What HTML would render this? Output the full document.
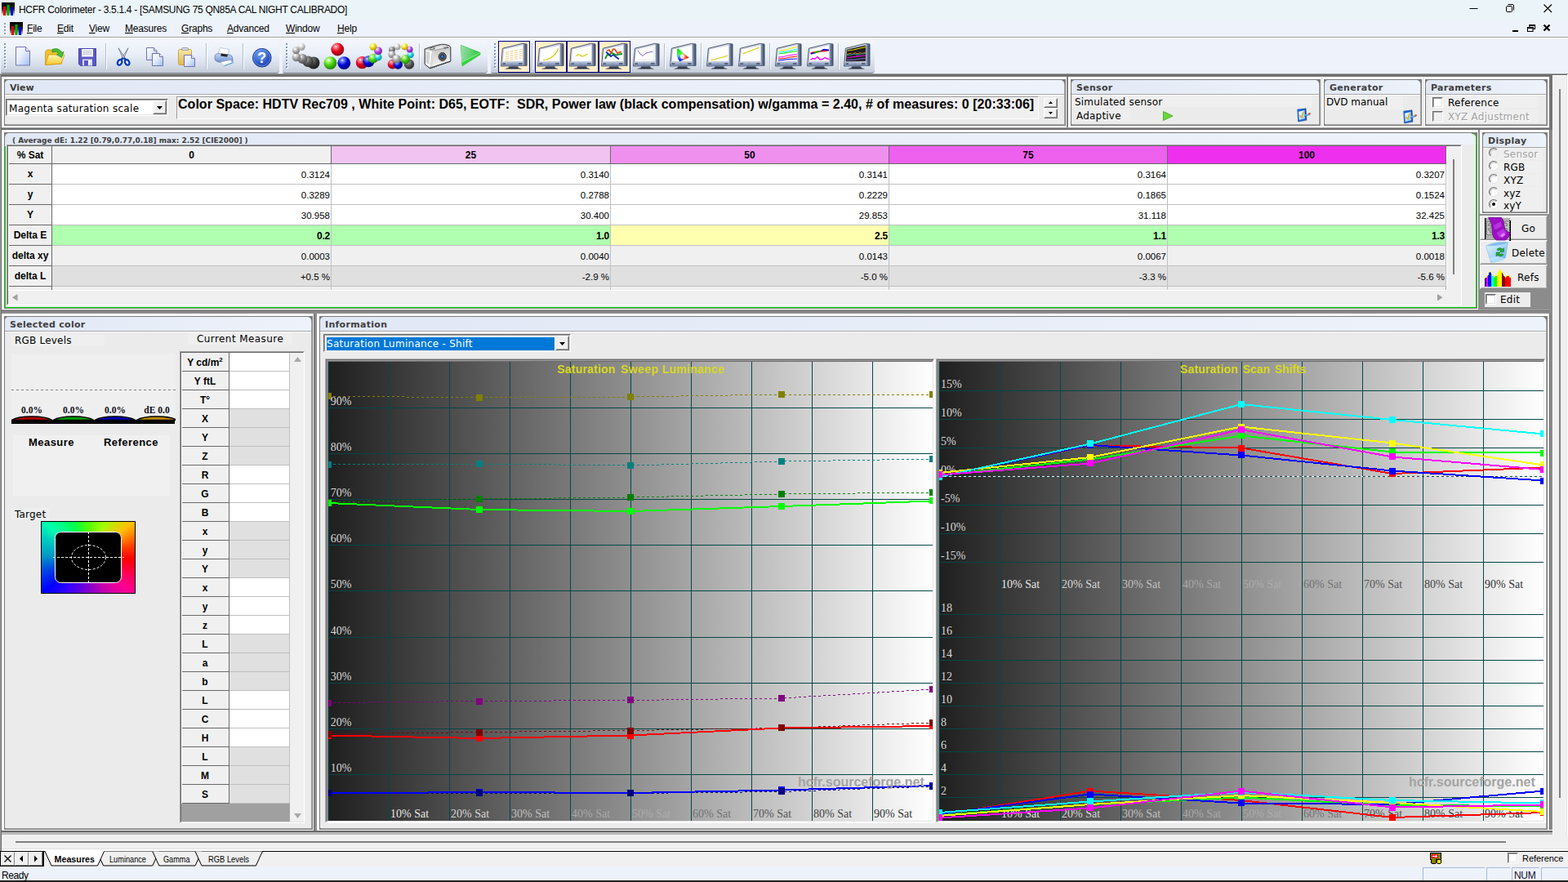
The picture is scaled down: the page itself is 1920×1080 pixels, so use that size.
<!DOCTYPE html>
<html><head><meta charset="utf-8"><title>HCFR Colorimeter</title>
<style>
html,body{margin:0;padding:0;}
body{width:1920px;height:1080px;position:relative;overflow:hidden;background:#fff;font-family:"Liberation Sans",sans-serif;font-size:12px;color:#000;}
div{position:absolute;box-sizing:border-box;}
svg{position:absolute;overflow:visible;}
.vd{font-family:"DejaVu Sans","Liberation Sans",sans-serif;margin-top:1px;}
.ph{font-family:"DejaVu Sans","Liberation Sans",sans-serif;font-weight:bold;font-size:11px;color:#3e3e3e;letter-spacing:0.3px;}
.tb{font-family:"Liberation Sans",sans-serif;font-weight:bold;font-size:12px;text-align:center;}
.tm{font-family:"Liberation Serif",serif;}
.num{font-family:"Liberation Sans",sans-serif;font-size:11.5px;text-align:right;}
u{text-decoration:underline;text-underline-offset:1px;}
</style></head>
<body>
<div style="left:0px;top:0px;width:1920px;height:23px;background:#ebf4f8;"></div>
<div style="left:0px;top:23px;width:1920px;height:23px;background:#eef2fb;"></div>
<div style="left:0px;top:45px;width:1920px;height:1px;background:#a0a0a0;"></div>
<svg style="left:2px;top:3px" width="16" height="16" viewBox="0 0 16 16"><defs><linearGradient id="ig23" x1="0" y1="0" x2="0" y2="1"><stop offset="0" stop-color="#000"/><stop offset="0.5" stop-color="#222"/><stop offset="1" stop-color="#f4f4f4"/></linearGradient></defs><rect width="16" height="16" fill="url(#ig23)"/><rect x="2" y="5" width="3" height="11" fill="#e00000"/><rect x="6.5" y="3" width="3" height="13" fill="#00b000"/><rect x="11" y="6" width="3" height="10" fill="#0000e0"/></svg>
<div style="left:23px;top:4px;white-space:nowrap;font-size:12px;line-height:16px;letter-spacing:-0.3px;">HCFR Colorimeter - 3.5.1.4 - [SAMSUNG 75 QN85A CAL NIGHT CALIBRADO]</div>
<svg style="left:1790px;top:0" width="130" height="23" viewBox="0 0 130 23"><path d="M9.500 10.500h10" stroke="#000" stroke-width="1" fill="none"/><rect x="54.500" y="7.500" width="7" height="7" rx="1.200" stroke="#000" stroke-width="1" fill="none"/><path d="M56.500 5.500h5.500q1.500 0 1.500 1.500v5.500" stroke="#000" stroke-width="1" fill="none"/><path d="M100.500 5.500l9.500 9.500M110 5.500l-9.500 9.500" stroke="#000" stroke-width="1.100" fill="none"/></svg>
<div style="left:6px;top:29px;width:2px;height:2px;background:#fff;"></div>
<div style="left:5px;top:28px;width:2px;height:2px;background:#8aa0c4;"></div>
<div style="left:6px;top:33px;width:2px;height:2px;background:#fff;"></div>
<div style="left:5px;top:32px;width:2px;height:2px;background:#8aa0c4;"></div>
<div style="left:6px;top:37px;width:2px;height:2px;background:#fff;"></div>
<div style="left:5px;top:36px;width:2px;height:2px;background:#8aa0c4;"></div>
<div style="left:6px;top:41px;width:2px;height:2px;background:#fff;"></div>
<div style="left:5px;top:40px;width:2px;height:2px;background:#8aa0c4;"></div>
<svg style="left:12px;top:27px" width="16" height="16" viewBox="0 0 16 16"><defs><linearGradient id="ig1227" x1="0" y1="0" x2="0" y2="1"><stop offset="0" stop-color="#000"/><stop offset="0.5" stop-color="#222"/><stop offset="1" stop-color="#f4f4f4"/></linearGradient></defs><rect width="16" height="16" fill="url(#ig1227)"/><rect x="2" y="5" width="3" height="11" fill="#e00000"/><rect x="6.5" y="3" width="3" height="13" fill="#00b000"/><rect x="11" y="6" width="3" height="10" fill="#0000e0"/></svg>
<div style="left:33px;top:27px;white-space:nowrap;font-size:12px;line-height:16px;letter-spacing:-0.2px;"><u>F</u>ile</div>
<div style="left:70px;top:27px;white-space:nowrap;font-size:12px;line-height:16px;letter-spacing:-0.2px;"><u>E</u>dit</div>
<div style="left:109px;top:27px;white-space:nowrap;font-size:12px;line-height:16px;letter-spacing:-0.2px;"><u>V</u>iew</div>
<div style="left:153px;top:27px;white-space:nowrap;font-size:12px;line-height:16px;letter-spacing:-0.2px;"><u>M</u>easures</div>
<div style="left:222px;top:27px;white-space:nowrap;font-size:12px;line-height:16px;letter-spacing:-0.2px;"><u>G</u>raphs</div>
<div style="left:278px;top:27px;white-space:nowrap;font-size:12px;line-height:16px;letter-spacing:-0.2px;"><u>A</u>dvanced</div>
<div style="left:350px;top:27px;white-space:nowrap;font-size:12px;line-height:16px;letter-spacing:-0.2px;"><u>W</u>indow</div>
<div style="left:413px;top:27px;white-space:nowrap;font-size:12px;line-height:16px;letter-spacing:-0.2px;"><u>H</u>elp</div>
<svg style="left:1848px;top:26px" width="60" height="18" viewBox="0 0 60 18"><rect x="4" y="11" width="7" height="2" fill="#000"/><path d="M22.500 7.500h6.500v5h-6.500zM25 7v-2.500h6.500v5h-2.500" stroke="#000" stroke-width="1.100" fill="none"/><rect x="22" y="7" width="8" height="2" fill="#000"/><rect x="24.500" y="4" width="7.500" height="2" fill="#000"/><path d="M42.500 4.500l7 7M49.500 4.500l-7 7" stroke="#000" stroke-width="2.300" fill="none"/></svg>
<div style="left:0px;top:46px;width:1920px;height:44px;background:#eef2fb;"></div>
<div style="left:0px;top:46px;width:1920px;height:1px;background:#fff;"></div>
<div style="left:1px;top:48px;width:341px;height:42px;background:linear-gradient(#f4f7fc 0%,#e9eff8 45%,#d5dde9 78%,#c3cbd8 100%);border-radius:3px 4px 4px 2px;border-bottom:1px solid #7c848f;"></div>
<div style="left:6px;top:54px;width:2px;height:2px;background:#fff;"></div>
<div style="left:5px;top:53px;width:2px;height:2px;background:#7f98c2;"></div>
<div style="left:6px;top:58px;width:2px;height:2px;background:#fff;"></div>
<div style="left:5px;top:57px;width:2px;height:2px;background:#7f98c2;"></div>
<div style="left:6px;top:62px;width:2px;height:2px;background:#fff;"></div>
<div style="left:5px;top:61px;width:2px;height:2px;background:#7f98c2;"></div>
<div style="left:6px;top:66px;width:2px;height:2px;background:#fff;"></div>
<div style="left:5px;top:65px;width:2px;height:2px;background:#7f98c2;"></div>
<div style="left:6px;top:70px;width:2px;height:2px;background:#fff;"></div>
<div style="left:5px;top:69px;width:2px;height:2px;background:#7f98c2;"></div>
<div style="left:6px;top:74px;width:2px;height:2px;background:#fff;"></div>
<div style="left:5px;top:73px;width:2px;height:2px;background:#7f98c2;"></div>
<div style="left:6px;top:78px;width:2px;height:2px;background:#fff;"></div>
<div style="left:5px;top:77px;width:2px;height:2px;background:#7f98c2;"></div>
<div style="left:6px;top:82px;width:2px;height:2px;background:#fff;"></div>
<div style="left:5px;top:81px;width:2px;height:2px;background:#7f98c2;"></div>
<div style="left:346px;top:48px;width:251px;height:42px;background:linear-gradient(#f4f7fc 0%,#e9eff8 45%,#d5dde9 78%,#c3cbd8 100%);border-radius:3px 4px 4px 2px;border-bottom:1px solid #7c848f;"></div>
<div style="left:351px;top:54px;width:2px;height:2px;background:#fff;"></div>
<div style="left:350px;top:53px;width:2px;height:2px;background:#7f98c2;"></div>
<div style="left:351px;top:58px;width:2px;height:2px;background:#fff;"></div>
<div style="left:350px;top:57px;width:2px;height:2px;background:#7f98c2;"></div>
<div style="left:351px;top:62px;width:2px;height:2px;background:#fff;"></div>
<div style="left:350px;top:61px;width:2px;height:2px;background:#7f98c2;"></div>
<div style="left:351px;top:66px;width:2px;height:2px;background:#fff;"></div>
<div style="left:350px;top:65px;width:2px;height:2px;background:#7f98c2;"></div>
<div style="left:351px;top:70px;width:2px;height:2px;background:#fff;"></div>
<div style="left:350px;top:69px;width:2px;height:2px;background:#7f98c2;"></div>
<div style="left:351px;top:74px;width:2px;height:2px;background:#fff;"></div>
<div style="left:350px;top:73px;width:2px;height:2px;background:#7f98c2;"></div>
<div style="left:351px;top:78px;width:2px;height:2px;background:#fff;"></div>
<div style="left:350px;top:77px;width:2px;height:2px;background:#7f98c2;"></div>
<div style="left:351px;top:82px;width:2px;height:2px;background:#fff;"></div>
<div style="left:350px;top:81px;width:2px;height:2px;background:#7f98c2;"></div>
<div style="left:601px;top:48px;width:470px;height:42px;background:linear-gradient(#f4f7fc 0%,#e9eff8 45%,#d5dde9 78%,#c3cbd8 100%);border-radius:3px 4px 4px 2px;border-bottom:1px solid #7c848f;"></div>
<div style="left:606px;top:54px;width:2px;height:2px;background:#fff;"></div>
<div style="left:605px;top:53px;width:2px;height:2px;background:#7f98c2;"></div>
<div style="left:606px;top:58px;width:2px;height:2px;background:#fff;"></div>
<div style="left:605px;top:57px;width:2px;height:2px;background:#7f98c2;"></div>
<div style="left:606px;top:62px;width:2px;height:2px;background:#fff;"></div>
<div style="left:605px;top:61px;width:2px;height:2px;background:#7f98c2;"></div>
<div style="left:606px;top:66px;width:2px;height:2px;background:#fff;"></div>
<div style="left:605px;top:65px;width:2px;height:2px;background:#7f98c2;"></div>
<div style="left:606px;top:70px;width:2px;height:2px;background:#fff;"></div>
<div style="left:605px;top:69px;width:2px;height:2px;background:#7f98c2;"></div>
<div style="left:606px;top:74px;width:2px;height:2px;background:#fff;"></div>
<div style="left:605px;top:73px;width:2px;height:2px;background:#7f98c2;"></div>
<div style="left:606px;top:78px;width:2px;height:2px;background:#fff;"></div>
<div style="left:605px;top:77px;width:2px;height:2px;background:#7f98c2;"></div>
<div style="left:606px;top:82px;width:2px;height:2px;background:#fff;"></div>
<div style="left:605px;top:81px;width:2px;height:2px;background:#7f98c2;"></div>
<div style="left:129px;top:53px;width:1px;height:32px;background:#b4bccb;"></div>
<div style="left:130px;top:53px;width:1px;height:32px;background:#fff;"></div>
<div style="left:252px;top:53px;width:1px;height:32px;background:#b4bccb;"></div>
<div style="left:253px;top:53px;width:1px;height:32px;background:#fff;"></div>
<div style="left:297px;top:53px;width:1px;height:32px;background:#b4bccb;"></div>
<div style="left:298px;top:53px;width:1px;height:32px;background:#fff;"></div>
<div style="left:513px;top:53px;width:1px;height:32px;background:#b4bccb;"></div>
<div style="left:514px;top:53px;width:1px;height:32px;background:#fff;"></div>
<div style="left:651px;top:53px;width:1px;height:32px;background:#b4bccb;"></div>
<div style="left:652px;top:53px;width:1px;height:32px;background:#fff;"></div>
<div style="left:813px;top:53px;width:1px;height:32px;background:#b4bccb;"></div>
<div style="left:814px;top:53px;width:1px;height:32px;background:#fff;"></div>
<div style="left:858px;top:53px;width:1px;height:32px;background:#b4bccb;"></div>
<div style="left:859px;top:53px;width:1px;height:32px;background:#fff;"></div>
<div style="left:942px;top:53px;width:1px;height:32px;background:#b4bccb;"></div>
<div style="left:943px;top:53px;width:1px;height:32px;background:#fff;"></div>
<div style="left:1026px;top:53px;width:1px;height:32px;background:#b4bccb;"></div>
<div style="left:1027px;top:53px;width:1px;height:32px;background:#fff;"></div>
<svg width="0" height="0" style="left:0;top:0"><defs>
<linearGradient id="pg" x1="0" y1="0" x2="1" y2="1"><stop offset="0" stop-color="#ffffff"/><stop offset="0.45" stop-color="#e6edfc"/><stop offset="1" stop-color="#9ebcf4"/></linearGradient>
<linearGradient id="fold" x1="0" y1="0" x2="0" y2="1"><stop offset="0" stop-color="#fff8b8"/><stop offset="1" stop-color="#f8c428"/></linearGradient>
<radialGradient id="helpg" cx="0.4" cy="0.3" r="0.8"><stop offset="0" stop-color="#7aa4f0"/><stop offset="0.6" stop-color="#2c5cc8"/><stop offset="1" stop-color="#173a98"/></radialGradient>
<linearGradient id="bez" x1="0" y1="0" x2="0" y2="1"><stop offset="0" stop-color="#c4d0e4"/><stop offset="1" stop-color="#6c7ea4"/></linearGradient>
<linearGradient id="side" x1="0" y1="0" x2="1" y2="0"><stop offset="0" stop-color="#8a9ab8"/><stop offset="1" stop-color="#3c4660"/></linearGradient>
<linearGradient id="camg" x1="0" y1="0" x2="0.300" y2="1"><stop offset="0" stop-color="#b8b8b8"/><stop offset="0.5" stop-color="#dcdcdc"/><stop offset="1" stop-color="#f8f8f8"/></linearGradient>
<linearGradient id="playg" x1="0" y1="0.300" x2="1" y2="0.500"><stop offset="0" stop-color="#98dca8"/><stop offset="0.55" stop-color="#60d070"/><stop offset="1" stop-color="#28c838"/></linearGradient>
<linearGradient id="pasteg" x1="0" y1="0" x2="0" y2="1"><stop offset="0" stop-color="#f8e8a8"/><stop offset="1" stop-color="#e0b850"/></linearGradient>
<linearGradient id="prn" x1="0" y1="0" x2="0" y2="1"><stop offset="0" stop-color="#c8dcf4"/><stop offset="1" stop-color="#6488c8"/></linearGradient>
<radialGradient id="bw" cx="0.36" cy="0.28" r="0.78"><stop offset="0" stop-color="#ffffff"/><stop offset="0.12" stop-color="#ffffff"/><stop offset="0.5" stop-color="#c8c8c8"/><stop offset="1" stop-color="#8c8c8c"/></radialGradient><radialGradient id="bg1" cx="0.36" cy="0.28" r="0.78"><stop offset="0" stop-color="#ffffff"/><stop offset="0.12" stop-color="#f0f0f0"/><stop offset="0.5" stop-color="#a8a8a8"/><stop offset="1" stop-color="#686868"/></radialGradient><radialGradient id="bg2" cx="0.36" cy="0.28" r="0.78"><stop offset="0" stop-color="#ffffff"/><stop offset="0.12" stop-color="#d0d0d0"/><stop offset="0.5" stop-color="#808080"/><stop offset="1" stop-color="#484848"/></radialGradient><radialGradient id="bg3" cx="0.36" cy="0.28" r="0.78"><stop offset="0" stop-color="#ffffff"/><stop offset="0.12" stop-color="#a0a0a0"/><stop offset="0.5" stop-color="#585858"/><stop offset="1" stop-color="#282828"/></radialGradient><radialGradient id="bg4" cx="0.36" cy="0.28" r="0.78"><stop offset="0" stop-color="#ffffff"/><stop offset="0.12" stop-color="#808080"/><stop offset="0.5" stop-color="#383838"/><stop offset="1" stop-color="#181818"/></radialGradient><radialGradient id="br" cx="0.36" cy="0.28" r="0.78"><stop offset="0" stop-color="#ffffff"/><stop offset="0.12" stop-color="#ff9090"/><stop offset="0.5" stop-color="#e00020"/><stop offset="1" stop-color="#800010"/></radialGradient><radialGradient id="bgr" cx="0.36" cy="0.28" r="0.78"><stop offset="0" stop-color="#ffffff"/><stop offset="0.12" stop-color="#c0ff90"/><stop offset="0.5" stop-color="#48d010"/><stop offset="1" stop-color="#187800"/></radialGradient><radialGradient id="bb" cx="0.36" cy="0.28" r="0.78"><stop offset="0" stop-color="#ffffff"/><stop offset="0.12" stop-color="#8090ff"/><stop offset="0.5" stop-color="#0008d8"/><stop offset="1" stop-color="#000070"/></radialGradient><radialGradient id="by" cx="0.36" cy="0.28" r="0.78"><stop offset="0" stop-color="#ffffff"/><stop offset="0.12" stop-color="#ffffc0"/><stop offset="0.5" stop-color="#f0d818"/><stop offset="1" stop-color="#a08800"/></radialGradient><radialGradient id="bp" cx="0.36" cy="0.28" r="0.78"><stop offset="0" stop-color="#ffffff"/><stop offset="0.12" stop-color="#f0c0ff"/><stop offset="0.5" stop-color="#b040e0"/><stop offset="1" stop-color="#602090"/></radialGradient><radialGradient id="bc" cx="0.36" cy="0.28" r="0.78"><stop offset="0" stop-color="#ffffff"/><stop offset="0.12" stop-color="#c0ffff"/><stop offset="0.5" stop-color="#20d0d8"/><stop offset="1" stop-color="#108088"/></radialGradient></defs></svg>
<svg style="left:18px;top:56px" width="21" height="26" viewBox="0 0 21 26"><path d="M1.500 1.500h12l5 5v17.500h-17z" fill="url(#pg)" stroke="#7472b4" stroke-width="1"/><path d="M13.500 1.500v5h5" fill="#e8ecff" stroke="#7472b4" stroke-width="1"/></svg>
<svg style="left:54px;top:57px" width="27" height="25" viewBox="0 0 27 25"><path d="M1.500 6.500l2 -2.500h7l2 2h9v15l-20 1.500z" fill="#f0c030" stroke="#c89818" stroke-width="0.8"/><path d="M1.500 22.500l4 -12.500h19.500l-4 11z" fill="url(#fold)" stroke="#d09818" stroke-width="0.8"/><path d="M10 3.500q8 -3 11.500 4l2.500 -1l-2.500 7l-6 -3.500l2.500 -1q-2.500 -4 -8 -2z" fill="#48c038" stroke="#208818" stroke-width="0.7"/></svg>
<svg style="left:95px;top:58px" width="24" height="24" viewBox="0 0 24 24"><path d="M1.500 1.500h21v21h-19l-2 -2z" fill="#5a58c4" stroke="#4846a8" stroke-width="1"/><rect x="5" y="2" width="14" height="9.500" fill="#f4f4fc"/><path d="M6.500 4.500h11M6.500 6.500h11M6.500 8.500h11" stroke="#b8b8c8" stroke-width="0.8"/><rect x="6" y="14.500" width="12" height="8" fill="#d8dcf0"/><rect x="8" y="16" width="5" height="6.500" fill="#5a58c4"/><path d="M13 16l4 0l-4 6z" fill="#fff"/></svg>
<svg style="left:142px;top:57px" width="19" height="25" viewBox="0 0 19 25"><path d="M9.200 13.500L6 16.500M9.200 13.500L12.400 16.500" stroke="#0a3ab4" stroke-width="2.400" fill="none"/><ellipse cx="4.600" cy="19.400" rx="2.500" ry="3.500" fill="#eef1f8" stroke="#0a3ab4" stroke-width="2.300" transform="rotate(28 4.600 19.400)"/><ellipse cx="13.700" cy="19.400" rx="2.500" ry="3.500" fill="#eef1f8" stroke="#0a3ab4" stroke-width="2.300" transform="rotate(-28 13.700 19.400)"/><path d="M15 1.800L7.600 13.200L9.600 14.200z" fill="#eceff4" stroke="#5a6272" stroke-width="0.700"/><path d="M3 1.800L10.600 13.200L8.600 14.200z" fill="#d4d9e2" stroke="#5a6272" stroke-width="0.700"/></svg>
<svg style="left:178px;top:57px" width="23" height="25" viewBox="0 0 23 25"><path d="M1.500 1.500h9l3.500 3.500v11.500h-12.500z" fill="url(#pg)" stroke="#7472b4" stroke-width="1"/><path d="M10.500 1.500v3.500h3.500" fill="#e8ecff" stroke="#7472b4"/><path d="M8.500 8.500h9l4 4v11h-13z" fill="url(#pg)" stroke="#7472b4" stroke-width="1"/><path d="M17.500 8.500v4h4" fill="#e8ecff" stroke="#7472b4"/></svg>
<svg style="left:217px;top:57px" width="23" height="26" viewBox="0 0 23 26"><rect x="1.500" y="3.500" width="16" height="19" rx="2" fill="url(#pasteg)" stroke="#c8a040" stroke-width="1"/><path d="M5.500 4.500v-1.500q0 -1.500 1.500 -1.500h5q1.500 0 1.500 1.500v1.500z" fill="#d8d8e0" stroke="#9090a0" stroke-width="0.8"/><path d="M8.500 10.500h9l4 4v10h-13z" fill="url(#pg)" stroke="#7472b4" stroke-width="1"/><path d="M17.500 10.500v4h4" fill="#e8ecff" stroke="#7472b4"/></svg>
<svg style="left:261px;top:57px" width="26" height="26" viewBox="0 0 26 26"><path d="M6 9l2.500 -7.500l11 2l-1.500 7z" fill="#fff" stroke="#b0bcd0" stroke-width="0.8"/><path d="M2 12q0 -3 4 -3.500l14 1.500q4 1 4 5v3q0 2 -3 2.500l-14 -1.500q-5 -1 -5 -4z" fill="url(#prn)" stroke="#5878b8" stroke-width="0.7"/><path d="M10 8.500l8 1.200l-1 3l-8 -1.200z" fill="#282830"/><path d="M9 19l12 -2.500l3.500 3.500l-11 4z" fill="#fff" stroke="#a0b0d0" stroke-width="0.7"/><path d="M13.500 23.500l11 -4" stroke="#48a0e0" stroke-width="1.200"/></svg>
<svg style="left:308px;top:58px" width="26" height="26" viewBox="0 0 26 26"><circle cx="12.800" cy="12.700" r="11.300" fill="url(#helpg)" stroke="#1c3c98" stroke-width="1"/><circle cx="12.800" cy="12.700" r="10" fill="none" stroke="#9cb8f0" stroke-width="0.8" opacity="0.7"/><text x="12.800" y="19" text-anchor="middle" font-family="Liberation Sans,sans-serif" font-weight="bold" font-size="18px" fill="#fff">?</text></svg>
<svg style="left:340px;top:46px" width="60" height="46" viewBox="0 0 60 46"><circle cx="43.9" cy="30.9" r="7.5" fill="url(#bg4)"/><circle cx="37.1" cy="29.3" r="6.8" fill="url(#bg3)"/><circle cx="30.4" cy="25.9" r="6.0" fill="url(#bg2)"/><circle cx="22.9" cy="23.9" r="5.3" fill="url(#bg1)"/><circle cx="22.5" cy="15.8" r="4.5" fill="url(#bg1)"/><circle cx="29.3" cy="11.3" r="4.4" fill="url(#bw)"/></svg>
<svg style="left:340px;top:46px" width="100" height="46" viewBox="0 0 100 46"><circle cx="73.3" cy="14.5" r="7.9" fill="url(#br)"/><circle cx="64.4" cy="31.2" r="7.9" fill="url(#bgr)"/><circle cx="81.3" cy="31.2" r="7.9" fill="url(#bb)"/></svg>
<svg style="left:340px;top:46px" width="140" height="46" viewBox="0 0 140 46"><circle cx="103.4" cy="30.7" r="7.6" fill="url(#br)"/><circle cx="111.4" cy="29.3" r="7.0" fill="url(#bb)"/><circle cx="117.0" cy="25.7" r="5.9" fill="url(#bgr)"/><circle cx="123.2" cy="23.9" r="4.5" fill="url(#bc)"/><circle cx="123.1" cy="16.3" r="4.9" fill="url(#bp)"/><circle cx="117.0" cy="11.3" r="4.5" fill="url(#by)"/></svg>
<svg style="left:340px;top:46px" width="180" height="46" viewBox="0 0 180 46"><circle cx="161.0" cy="32.6" r="6.2" fill="url(#bg3)"/><circle cx="140.6" cy="32.6" r="5.9" fill="url(#br)"/><circle cx="147.4" cy="33.1" r="5.6" fill="url(#bb)"/><circle cx="156.4" cy="26.7" r="5.6" fill="url(#bgr)"/><circle cx="162.7" cy="21.1" r="4.2" fill="url(#bc)"/><circle cx="161.7" cy="14.6" r="3.9" fill="url(#bp)"/><circle cx="155.4" cy="11.3" r="4.1" fill="url(#by)"/><circle cx="146.3" cy="11.3" r="4.1" fill="url(#bw)"/><circle cx="139.9" cy="14.8" r="3.9" fill="url(#bg2)"/><circle cx="139.9" cy="20.8" r="4.5" fill="url(#bg1)"/><circle cx="145.6" cy="26.2" r="5.3" fill="url(#bg1)"/></svg>
<svg style="left:519px;top:53px" width="34" height="32" viewBox="0 0 34 32"><path d="M1.250 7L7.500 4.900L16.700 2.400L21.500 1.400H25.400L30.800 2.800L32.700 4.500V22L7.500 30.500L1.250 25.750z" fill="#ececec" stroke="#4c4c4c" stroke-width="1" stroke-linejoin="round"/><path d="M1.250 7L7.500 4.900L16.700 2.400L21.500 1.400H25.400L30.800 2.800L32.700 4.500L10.400 9.100z" fill="#d4d4d4"/><path d="M10.400 9.100L32.700 4.500V22L8.500 30.100z" fill="url(#camg)"/><path d="M1.250 7L10.400 9.100L8.200 30.200L1.250 25.750z" fill="#fafafa"/><path d="M10.400 9.100L12.800 9.600L11 29.300L8.200 30.200z" fill="#e2e2e2"/><path d="M3 10.300l3.800 0.800l-0.500 14.200l-3.300 -1.700z" fill="#e0e0e0" stroke="#b4b4b4" stroke-width="0.500"/><path d="M4.200 11.500l1.200 0.300l-0.300 11.500l-0.900 -0.500z" fill="#c4c4c4"/><path d="M10.800 12h1.500M10.600 15h1.500M10.400 18h1.500M10.200 21h1.500M10 24h1.500" stroke="#b8b8b8" stroke-width="0.500"/><ellipse cx="10.400" cy="6.200" rx="3.300" ry="1.100" fill="#e8e8e8" stroke="#303030" stroke-width="0.700" transform="rotate(-8 10.400 6.200)"/><path d="M24.500 5.300l5.500 -1.100v1.500l-5.500 1.100z" fill="#505050"/><path d="M14 6.500l9 -2.200" stroke="#f8f8f8" stroke-width="1.200"/><ellipse cx="22.700" cy="16.400" rx="5.800" ry="6.300" fill="#fafafa" stroke="#c0c0c0" stroke-width="0.500"/><ellipse cx="22.700" cy="16.400" rx="4.700" ry="5.100" fill="#585858" stroke="#282828" stroke-width="0.800"/><ellipse cx="22.700" cy="16.400" rx="3.200" ry="3.500" fill="#303030" stroke="#808080" stroke-width="0.500"/><ellipse cx="22.800" cy="16.400" rx="1.700" ry="1.900" fill="#1860e8"/><circle cx="22.300" cy="15.800" r="0.700" fill="#40b0ff"/><path d="M1.250 7L7.500 4.900L16.700 2.400L21.500 1.400H25.400L30.800 2.800L32.700 4.500V22L7.500 30.500L1.250 25.750z" fill="none" stroke="#4a4a4a" stroke-width="1" stroke-linejoin="round"/><path d="M1.250 7L10.400 9.100L32.700 4.500" fill="none" stroke="#8c8c8c" stroke-width="0.600"/><path d="M10.400 9.100L8.200 30.200" stroke="#b0b0b0" stroke-width="0.500"/><path d="M7.500 30.500L32.700 22" stroke="#303030" stroke-width="1.400" stroke-dasharray="1.600 0.800"/></svg>
<svg style="left:563px;top:54px" width="27" height="28" viewBox="0 0 27 28"><path d="M1.400 1.400L25 10.600V12.700L3.100 26.800z" fill="#30d838" stroke="#38c848" stroke-width="1" stroke-linejoin="round"/><path d="M1.400 1.400L24.750 10.600L2.250 22.250z" fill="url(#playg)"/><path d="M2.250 22.250L24.750 10.600" stroke="#b4f0b8" stroke-width="0.700"/></svg>
<div style="left:610px;top:50px;width:39px;height:39px;background:#ffefc8;border:1px solid #000080;"></div>
<svg style="left:613px;top:51px" width="34" height="35" viewBox="0 0 34 35"><path d="M2.400 8.300L26.500 2.400L32 3V29.300L0.600 30z" fill="#e4e9f2" stroke="#465064" stroke-width="1" stroke-linejoin="round"/><path d="M27.800 2.800L32 3V29.300L27.800 29.400z" fill="url(#side)"/><path d="M1.100 24.800L27.800 24.200V29.400L1 29.800z" fill="url(#bez)"/><path d="M3.700 9.400L27.300 4.200V24L2.600 24.600z" fill="#ffffff" stroke="#a8b2c8" stroke-width="0.500"/><rect x="2.500" y="26.300" width="3.500" height="1.500" fill="#4a546c"/><rect x="22" y="26.200" width="4.500" height="1.600" fill="#4a546c"/><rect x="13" y="26.600" width="1.500" height="1.200" fill="#7884a0"/><path d="M10.500 30.200h10.500l1.200 2h-13z" fill="#3c4458"/><path d="M5 33.500q2 -1.500 5.500 -1.500h10q3.500 0 5.500 1.500z" fill="#2c3244"/><rect x="6.0" y="12.5" width="4" height="1.400" fill="#f4d8a0" transform="skewY(-11.500)" transform-origin="6.0 12.5"/><rect x="11.5" y="11.4" width="4" height="1.400" fill="#f4d8a0" transform="skewY(-11.500)" transform-origin="11.5 11.4"/><rect x="17.0" y="10.3" width="4" height="1.400" fill="#f4d8a0" transform="skewY(-11.500)" transform-origin="17.0 10.3"/><rect x="22.5" y="9.2" width="4" height="1.400" fill="#f4d8a0" transform="skewY(-11.500)" transform-origin="22.5 9.2"/><rect x="6.0" y="15.1" width="4" height="1.400" fill="#f4d8a0" transform="skewY(-11.500)" transform-origin="6.0 15.1"/><rect x="11.5" y="14.0" width="4" height="1.400" fill="#f4d8a0" transform="skewY(-11.500)" transform-origin="11.5 14.0"/><rect x="17.0" y="12.9" width="4" height="1.400" fill="#f4d8a0" transform="skewY(-11.500)" transform-origin="17.0 12.899999999999999"/><rect x="22.5" y="11.8" width="4" height="1.400" fill="#f4d8a0" transform="skewY(-11.500)" transform-origin="22.5 11.799999999999999"/><rect x="6.0" y="17.7" width="4" height="1.400" fill="#f4d8a0" transform="skewY(-11.500)" transform-origin="6.0 17.7"/><rect x="11.5" y="16.6" width="4" height="1.400" fill="#f4d8a0" transform="skewY(-11.500)" transform-origin="11.5 16.599999999999998"/><rect x="17.0" y="15.5" width="4" height="1.400" fill="#f4d8a0" transform="skewY(-11.500)" transform-origin="17.0 15.5"/><rect x="22.5" y="14.4" width="4" height="1.400" fill="#f4d8a0" transform="skewY(-11.500)" transform-origin="22.5 14.399999999999999"/><rect x="6.0" y="20.3" width="4" height="1.400" fill="#f4d8a0" transform="skewY(-11.500)" transform-origin="6.0 20.3"/><rect x="11.5" y="19.2" width="4" height="1.400" fill="#f4d8a0" transform="skewY(-11.500)" transform-origin="11.5 19.2"/><rect x="17.0" y="18.1" width="4" height="1.400" fill="#f4d8a0" transform="skewY(-11.500)" transform-origin="17.0 18.1"/><rect x="22.5" y="17.0" width="4" height="1.400" fill="#f4d8a0" transform="skewY(-11.500)" transform-origin="22.5 17.0"/><rect x="6.0" y="22.9" width="4" height="1.400" fill="#f4d8a0" transform="skewY(-11.500)" transform-origin="6.0 22.9"/><rect x="11.5" y="21.8" width="4" height="1.400" fill="#f4d8a0" transform="skewY(-11.500)" transform-origin="11.5 21.799999999999997"/><rect x="17.0" y="20.7" width="4" height="1.400" fill="#f4d8a0" transform="skewY(-11.500)" transform-origin="17.0 20.7"/><rect x="22.5" y="19.6" width="4" height="1.400" fill="#f4d8a0" transform="skewY(-11.500)" transform-origin="22.5 19.599999999999998"/></svg>
<div style="left:655px;top:50px;width:39px;height:39px;background:#ffefc8;border:1px solid #000080;"></div>
<svg style="left:658px;top:51px" width="34" height="35" viewBox="0 0 34 35"><path d="M2.400 8.300L26.500 2.400L32 3V29.300L0.600 30z" fill="#e4e9f2" stroke="#465064" stroke-width="1" stroke-linejoin="round"/><path d="M27.800 2.800L32 3V29.300L27.800 29.400z" fill="url(#side)"/><path d="M1.100 24.800L27.800 24.200V29.400L1 29.800z" fill="url(#bez)"/><path d="M3.700 9.400L27.300 4.200V24L2.600 24.600z" fill="#ffffff" stroke="#a8b2c8" stroke-width="0.500"/><rect x="2.500" y="26.300" width="3.500" height="1.500" fill="#4a546c"/><rect x="22" y="26.200" width="4.500" height="1.600" fill="#4a546c"/><rect x="13" y="26.600" width="1.500" height="1.200" fill="#7884a0"/><path d="M10.500 30.200h10.500l1.200 2h-13z" fill="#3c4458"/><path d="M5 33.500q2 -1.500 5.500 -1.500h10q3.500 0 5.500 1.500z" fill="#2c3244"/><path d="M7 22.5 L11 22 L15 20.5 L19 18 L22 15 L24.5 11 L25.5 8.5" fill="none" stroke="#d0c800" stroke-width="1.25"/></svg>
<div style="left:694px;top:50px;width:39px;height:39px;background:#ffefc8;border:1px solid #000080;"></div>
<svg style="left:697px;top:51px" width="34" height="35" viewBox="0 0 34 35"><path d="M2.400 8.300L26.500 2.400L32 3V29.300L0.600 30z" fill="#e4e9f2" stroke="#465064" stroke-width="1" stroke-linejoin="round"/><path d="M27.800 2.800L32 3V29.300L27.800 29.400z" fill="url(#side)"/><path d="M1.100 24.800L27.800 24.200V29.400L1 29.800z" fill="url(#bez)"/><path d="M3.700 9.400L27.300 4.200V24L2.600 24.600z" fill="#ffffff" stroke="#a8b2c8" stroke-width="0.500"/><rect x="2.500" y="26.300" width="3.500" height="1.500" fill="#4a546c"/><rect x="22" y="26.200" width="4.500" height="1.600" fill="#4a546c"/><rect x="13" y="26.600" width="1.500" height="1.200" fill="#7884a0"/><path d="M10.500 30.200h10.500l1.200 2h-13z" fill="#3c4458"/><path d="M5 33.500q2 -1.500 5.500 -1.500h10q3.500 0 5.500 1.500z" fill="#2c3244"/><path d="M8.5 17.5 L11 15.8 L13 16.2 L15.5 18 L18 17.5 L20.5 16 L22.5 15" fill="none" stroke="#d0c800" stroke-width="1.2"/></svg>
<div style="left:733px;top:50px;width:39px;height:39px;background:#ffefc8;border:1px solid #000080;"></div>
<svg style="left:736px;top:51px" width="34" height="35" viewBox="0 0 34 35"><path d="M2.400 8.300L26.500 2.400L32 3V29.300L0.600 30z" fill="#e4e9f2" stroke="#465064" stroke-width="1" stroke-linejoin="round"/><path d="M27.800 2.800L32 3V29.300L27.800 29.400z" fill="url(#side)"/><path d="M1.100 24.800L27.800 24.200V29.400L1 29.800z" fill="url(#bez)"/><path d="M3.700 9.400L27.300 4.200V24L2.600 24.600z" fill="#ffffff" stroke="#a8b2c8" stroke-width="0.500"/><rect x="2.500" y="26.300" width="3.500" height="1.500" fill="#4a546c"/><rect x="22" y="26.200" width="4.500" height="1.600" fill="#4a546c"/><rect x="13" y="26.600" width="1.500" height="1.200" fill="#7884a0"/><path d="M10.500 30.200h10.500l1.200 2h-13z" fill="#3c4458"/><path d="M5 33.500q2 -1.500 5.500 -1.500h10q3.500 0 5.500 1.500z" fill="#2c3244"/><path d="M5 21 L7.5 16 L10 16.5 L13 13.5 L16 15 L19 16.5 L22 15.5 L26 15" fill="none" stroke="#109020" stroke-width="1.8"/><path d="M6 12.5 L9 15 L12 18 L15 16 L18 18.5 L22 21.5" fill="none" stroke="#1030a0" stroke-width="1.8"/><path d="M7 11 L10 10 L12 14 L15 9 L17 9.5 L20 14 L22 13 L25 12.5" fill="none" stroke="#e05020" stroke-width="1.8"/></svg>
<svg style="left:775px;top:51px" width="34" height="35" viewBox="0 0 34 35"><path d="M2.400 8.300L26.500 2.400L32 3V29.300L0.600 30z" fill="#e4e9f2" stroke="#465064" stroke-width="1" stroke-linejoin="round"/><path d="M27.800 2.800L32 3V29.300L27.800 29.400z" fill="url(#side)"/><path d="M1.100 24.800L27.800 24.200V29.400L1 29.800z" fill="url(#bez)"/><path d="M3.700 9.400L27.300 4.200V24L2.600 24.600z" fill="#ffffff" stroke="#a8b2c8" stroke-width="0.500"/><rect x="2.500" y="26.300" width="3.500" height="1.500" fill="#4a546c"/><rect x="22" y="26.200" width="4.500" height="1.600" fill="#4a546c"/><rect x="13" y="26.600" width="1.500" height="1.200" fill="#7884a0"/><path d="M10.500 30.200h10.500l1.200 2h-13z" fill="#3c4458"/><path d="M5 33.500q2 -1.500 5.500 -1.500h10q3.500 0 5.500 1.500z" fill="#2c3244"/><path d="M6 11 L9 15 L12 17.5 L16 14 L20 13 L24.5 12" fill="none" stroke="#8060e0" stroke-width="1"/><path d="M25.500 7v17" stroke="#a0d8a0" stroke-width="0.6" stroke-dasharray="1 1"/><path d="M5 22.500l20 -0.600" stroke="#d0d0d0" stroke-width="0.5"/></svg>
<svg style="left:820px;top:51px" width="34" height="35" viewBox="0 0 34 35"><path d="M2.400 8.300L26.500 2.400L32 3V29.300L0.600 30z" fill="#e4e9f2" stroke="#465064" stroke-width="1" stroke-linejoin="round"/><path d="M27.800 2.800L32 3V29.300L27.800 29.400z" fill="url(#side)"/><path d="M1.100 24.800L27.800 24.200V29.400L1 29.800z" fill="url(#bez)"/><path d="M3.700 9.400L27.300 4.200V24L2.600 24.600z" fill="#ffffff" stroke="#a8b2c8" stroke-width="0.500"/><rect x="2.500" y="26.300" width="3.500" height="1.500" fill="#4a546c"/><rect x="22" y="26.200" width="4.500" height="1.600" fill="#4a546c"/><rect x="13" y="26.600" width="1.500" height="1.200" fill="#7884a0"/><path d="M10.500 30.200h10.500l1.200 2h-13z" fill="#3c4458"/><path d="M5 33.500q2 -1.500 5.500 -1.500h10q3.500 0 5.500 1.500z" fill="#2c3244"/><defs><radialGradient id="cg" gradientUnits="userSpaceOnUse" cx="10.500" cy="9" r="13"><stop offset="0" stop-color="#00e800"/><stop offset="0.45" stop-color="#30f030" stop-opacity="0.850"/><stop offset="1" stop-color="#80ff80" stop-opacity="0"/></radialGradient><radialGradient id="cr" gradientUnits="userSpaceOnUse" cx="23.600" cy="19.500" r="10"><stop offset="0" stop-color="#ff0000"/><stop offset="0.4" stop-color="#ff3020" stop-opacity="0.850"/><stop offset="1" stop-color="#ff8080" stop-opacity="0"/></radialGradient><radialGradient id="cb" gradientUnits="userSpaceOnUse" cx="12.300" cy="24.600" r="9.500"><stop offset="0" stop-color="#0000ff"/><stop offset="0.45" stop-color="#2030ff" stop-opacity="0.850"/><stop offset="1" stop-color="#8080ff" stop-opacity="0"/></radialGradient><linearGradient id="cy" gradientUnits="userSpaceOnUse" x1="9" y1="17" x2="14" y2="17"><stop offset="0" stop-color="#00e0e0"/><stop offset="1" stop-color="#00e0e0" stop-opacity="0"/></linearGradient></defs><path d="M10.100 8.300Q9.200 8.500 9.200 10L9 17Q10 22 12.300 24.600L23.600 19.500z" fill="#fff"/><path d="M10.100 8.300Q9.200 8.500 9.200 10L9 17Q10 22 12.300 24.600L23.600 19.500z" fill="#ffff60" opacity="0.500"/><path d="M10.100 8.300Q9.200 8.500 9.200 10L9 17Q10 22 12.300 24.600L23.600 19.500z" fill="url(#cy)"/><path d="M10.100 8.300Q9.200 8.500 9.200 10L9 17Q10 22 12.300 24.600L23.600 19.500z" fill="url(#cg)"/><path d="M10.100 8.300Q9.200 8.500 9.200 10L9 17Q10 22 12.300 24.600L23.600 19.500z" fill="url(#cb)"/><path d="M10.100 8.300Q9.200 8.500 9.200 10L9 17Q10 22 12.300 24.600L23.600 19.500z" fill="url(#cr)"/><circle cx="15.500" cy="18.400" r="2.600" fill="#fff" opacity="0.750"/></svg>
<svg style="left:865px;top:51px" width="34" height="35" viewBox="0 0 34 35"><path d="M2.400 8.300L26.500 2.400L32 3V29.300L0.600 30z" fill="#e4e9f2" stroke="#465064" stroke-width="1" stroke-linejoin="round"/><path d="M27.800 2.800L32 3V29.300L27.800 29.400z" fill="url(#side)"/><path d="M1.100 24.800L27.800 24.200V29.400L1 29.800z" fill="url(#bez)"/><path d="M3.700 9.400L27.300 4.200V24L2.600 24.600z" fill="#ffffff" stroke="#a8b2c8" stroke-width="0.500"/><rect x="2.500" y="26.300" width="3.500" height="1.500" fill="#4a546c"/><rect x="22" y="26.200" width="4.500" height="1.600" fill="#4a546c"/><rect x="13" y="26.600" width="1.500" height="1.200" fill="#7884a0"/><path d="M10.500 30.200h10.500l1.200 2h-13z" fill="#3c4458"/><path d="M5 33.500q2 -1.500 5.500 -1.500h10q3.500 0 5.500 1.500z" fill="#2c3244"/><path d="M5 22.5 L9.5 22 L14 20.5 L18 19.5 L22 18.5 L26 17" fill="none" stroke="#d8c800" stroke-width="1.15"/></svg>
<svg style="left:904px;top:51px" width="34" height="35" viewBox="0 0 34 35"><path d="M2.400 8.300L26.500 2.400L32 3V29.300L0.600 30z" fill="#e4e9f2" stroke="#465064" stroke-width="1" stroke-linejoin="round"/><path d="M27.800 2.800L32 3V29.300L27.800 29.400z" fill="url(#side)"/><path d="M1.100 24.800L27.800 24.200V29.400L1 29.800z" fill="url(#bez)"/><path d="M3.700 9.400L27.300 4.200V24L2.600 24.600z" fill="#ffffff" stroke="#a8b2c8" stroke-width="0.500"/><rect x="2.500" y="26.300" width="3.500" height="1.500" fill="#4a546c"/><rect x="22" y="26.200" width="4.500" height="1.600" fill="#4a546c"/><rect x="13" y="26.600" width="1.500" height="1.200" fill="#7884a0"/><path d="M10.500 30.200h10.500l1.200 2h-13z" fill="#3c4458"/><path d="M5 33.500q2 -1.500 5.500 -1.500h10q3.500 0 5.500 1.500z" fill="#2c3244"/><path d="M5 15 L9 13.5 L13 12 L17 10.5 L21 9 L25.5 7" fill="none" stroke="#d8c800" stroke-width="1.15"/></svg>
<svg style="left:949px;top:51px" width="34" height="35" viewBox="0 0 34 35"><path d="M2.400 8.300L26.500 2.400L32 3V29.300L0.600 30z" fill="#e4e9f2" stroke="#465064" stroke-width="1" stroke-linejoin="round"/><path d="M27.800 2.800L32 3V29.300L27.800 29.400z" fill="url(#side)"/><path d="M1.100 24.800L27.800 24.200V29.400L1 29.800z" fill="url(#bez)"/><path d="M3.700 9.400L27.300 4.200V24L2.600 24.600z" fill="#ffffff" stroke="#a8b2c8" stroke-width="0.500"/><rect x="2.500" y="26.300" width="3.500" height="1.500" fill="#4a546c"/><rect x="22" y="26.200" width="4.500" height="1.600" fill="#4a546c"/><rect x="13" y="26.600" width="1.500" height="1.200" fill="#7884a0"/><path d="M10.500 30.200h10.500l1.200 2h-13z" fill="#3c4458"/><path d="M5 33.500q2 -1.500 5.500 -1.500h10q3.500 0 5.500 1.500z" fill="#2c3244"/><path d="M4.5 11 L14 10 L18 8.5 L27 6.5" fill="none" stroke="#e8d800" stroke-width="1"/><path d="M4.5 13 L12 12.5 L18 11 L27 9" fill="none" stroke="#00e8e8" stroke-width="1"/><path d="M4.5 15 L12 14 L20 12.5 L27 11.5" fill="none" stroke="#00e000" stroke-width="1"/><path d="M4 19 L10 18.5 L16 17 L27 15.5" fill="none" stroke="#ff00ff" stroke-width="1"/><path d="M4 21 L12 20.5 L18 19 L27 18" fill="none" stroke="#ff0000" stroke-width="1"/><path d="M4 23 L10 22.5 L16 21.5 L27 21" fill="none" stroke="#0000ff" stroke-width="1"/></svg>
<svg style="left:988px;top:51px" width="34" height="35" viewBox="0 0 34 35"><path d="M2.400 8.300L26.500 2.400L32 3V29.300L0.600 30z" fill="#e4e9f2" stroke="#465064" stroke-width="1" stroke-linejoin="round"/><path d="M27.800 2.800L32 3V29.300L27.800 29.400z" fill="url(#side)"/><path d="M1.100 24.800L27.800 24.200V29.400L1 29.800z" fill="url(#bez)"/><path d="M3.700 9.400L27.300 4.200V24L2.600 24.600z" fill="#ffffff" stroke="#a8b2c8" stroke-width="0.500"/><rect x="2.500" y="26.300" width="3.500" height="1.500" fill="#4a546c"/><rect x="22" y="26.200" width="4.500" height="1.600" fill="#4a546c"/><rect x="13" y="26.600" width="1.500" height="1.200" fill="#7884a0"/><path d="M10.500 30.200h10.500l1.200 2h-13z" fill="#3c4458"/><path d="M5 33.500q2 -1.500 5.500 -1.500h10q3.500 0 5.500 1.500z" fill="#2c3244"/><path d="M4.5 14.5 L8 13.5 L13 12.5 L18 11.5 L22 11 L26.5 10.5" fill="none" stroke="#ff0000" stroke-width="2.2"/><path d="M5 15 L9 13.5" fill="none" stroke="#0000ff" stroke-width="1.5"/><path d="M9 14.5 L13 12 L17 11.5" fill="none" stroke="#00d000" stroke-width="1.5"/><path d="M18 11 L21 9.5 L24 10 L27 10.5" fill="none" stroke="#0000ff" stroke-width="1.6"/><path d="M4.5 22.5 L7 20.5 L10 21 L13 18.5 L16 22 L19 21.5 L22 19.5 L25 21 L27.5 21.5" fill="none" stroke="#ff00ff" stroke-width="1.5"/></svg>
<svg style="left:1033px;top:51px" width="34" height="35" viewBox="0 0 34 35"><path d="M2.400 8.300L26.500 2.400L32 3V29.300L0.600 30z" fill="#e4e9f2" stroke="#465064" stroke-width="1" stroke-linejoin="round"/><path d="M27.800 2.800L32 3V29.300L27.800 29.400z" fill="url(#side)"/><path d="M1.100 24.800L27.800 24.200V29.400L1 29.800z" fill="url(#bez)"/><path d="M3.700 9.400L27.300 4.200V24L2.600 24.600z" fill="#202020" stroke="#a8b2c8" stroke-width="0.500"/><rect x="2.500" y="26.300" width="3.500" height="1.500" fill="#4a546c"/><rect x="22" y="26.200" width="4.500" height="1.600" fill="#4a546c"/><rect x="13" y="26.600" width="1.500" height="1.200" fill="#7884a0"/><path d="M10.500 30.200h10.500l1.200 2h-13z" fill="#3c4458"/><path d="M5 33.500q2 -1.500 5.500 -1.500h10q3.500 0 5.500 1.500z" fill="#2c3244"/><path d="M4.5 11 L12 10 L18 8.5 L27 6.5" fill="none" stroke="#e8d800" stroke-width="1.1"/><path d="M4 15.5 L8 14.5 L11 15.5 L14 13.5 L17 15 L20 13.5 L23 14.5 L27 13" fill="none" stroke="#e07020" stroke-width="1"/><path d="M4 16.5 L9 16 L13 15 L17 16 L22 15 L27 14.5" fill="none" stroke="#20a080" stroke-width="1"/><path d="M4 19.5 L10 19 L16 18 L27 17" fill="none" stroke="#ff00ff" stroke-width="1"/><path d="M4 22.5 L14 22 L20 21 L27 20.5" fill="none" stroke="#8070e0" stroke-width="1"/></svg>
<div style="left:0px;top:90px;width:1920px;height:951px;background:#fff;"></div>
<div style="left:0px;top:90px;width:1920px;height:1px;background:#a0a0a0;"></div>
<div style="left:0px;top:91px;width:1919px;height:1px;background:#696969;"></div>
<div style="left:0px;top:92px;width:1901px;height:2px;background:#727272;"></div>
<div style="left:0px;top:91px;width:1px;height:950px;background:#a0a0a0;"></div>
<div style="left:1px;top:92px;width:1px;height:949px;background:#696969;"></div>
<div style="left:1901px;top:92px;width:19px;height:950px;background:#f0f0f0;border-left:1px solid #fff;border-top:1px solid #fff;"></div>
<div style="left:1918px;top:92px;width:1px;height:950px;background:#e4e4e4;"></div>
<div style="left:1919px;top:91px;width:1px;height:951px;background:#fff;"></div>
<div style="left:1897px;top:94px;width:4px;height:65px;background:#747474;"></div>
<div style="left:1897px;top:159px;width:1px;height:860px;background:#696969;"></div>
<div style="left:1898px;top:159px;width:3px;height:860px;background:#8c8c8c;"></div>
<div style="left:1909px;top:109px;width:2px;height:868px;background:#808080;"></div>
<!--PANELS-->
<div style="left:2px;top:156px;width:1895px;height:1px;background:#a4a4a4;"></div>
<div style="left:2px;top:157px;width:1895px;height:2px;background:#6e6e6e;"></div>
<div style="left:1306px;top:94px;width:2px;height:62px;background:#808080;"></div>
<div style="left:1618px;top:95px;width:1px;height:60px;background:#d8d8d8;"></div>
<div style="left:1742px;top:95px;width:1px;height:60px;background:#d8d8d8;"></div>
<div style="left:5px;top:97px;width:1300px;height:57px;background:#7b7b7b;"><div style="left:1px;top:1px;width:1297px;height:54px;background:#ebebeb;border-radius:5px 5px 0 0;overflow:hidden;box-shadow:1px 1px 0 #a8a8a8;"><div style="left:0;top:0;width:1297px;height:17px;background:linear-gradient(90deg,#e1e8f5,#eef2fa);"></div><div style="left:0;top:17px;width:1297px;height:1px;background:#a6a6a6;"></div><div style="left:0;top:18px;width:1297px;height:1px;background:#fdfdfd;"></div><div class="ph" style="left:6px;top:3px;line-height:14px;white-space:nowrap;"><span style="letter-spacing:0">View</span></div></div></div>
<div style="left:7px;top:121px;width:199px;height:21px;background:#fff;border:1px solid #696969;border-right-color:#fff;border-bottom-color:#fff;"></div>
<div style="left:8px;top:122px;width:197px;height:19px;border:1px solid #a0a0a0;border-right-color:#e3e3e3;border-bottom-color:#e3e3e3;"></div>
<div class="vd" style="left:11px;top:125px;white-space:nowrap;font-size:12px;line-height:15px;color:#000;letter-spacing:0.3px;">Magenta saturation scale</div>
<div style="left:187px;top:123px;width:17px;height:17px;background:#f0f0f0;border:1px solid #fff;border-right-color:#696969;border-bottom-color:#696969;"></div>
<div style="left:188px;top:124px;width:15px;height:15px;border:1px solid #f0f0f0;border-right-color:#a0a0a0;border-bottom-color:#a0a0a0;"></div>
<svg style="left:192px;top:130px" width="7" height="4" viewBox="0 0 7 4"><path d="M0 0h7l-3.500 4z" fill="#000"/></svg>
<div style="left:216px;top:118px;width:1056px;height:28px;background:#f0f0f0;border:1px solid #a0a0a0;border-right-color:#fff;border-bottom-color:#fff;"></div>
<div style="left:218px;top:118px;white-space:nowrap;font-weight:bold;font-size:16px;line-height:20px;letter-spacing:0.03px;">Color Space: HDTV Rec709 , White Point: D65, EOTF:&nbsp; SDR, Power law (black compensation) w/gamma = 2.40, # of measures: 0 [20:33:06]</div>
<div style="left:1278px;top:120px;width:17px;height:12px;background:#f0f0f0;border:1px solid #fff;border-right-color:#696969;border-bottom-color:#696969;"></div>
<div style="left:1279px;top:121px;width:15px;height:10px;border:1px solid #f0f0f0;border-right-color:#a0a0a0;border-bottom-color:#a0a0a0;"></div>
<div style="left:1278px;top:133px;width:17px;height:12px;background:#f0f0f0;border:1px solid #fff;border-right-color:#696969;border-bottom-color:#696969;"></div>
<div style="left:1279px;top:134px;width:15px;height:10px;border:1px solid #f0f0f0;border-right-color:#a0a0a0;border-bottom-color:#a0a0a0;"></div>
<svg style="left:1284px;top:124px" width="5" height="3" viewBox="0 0 5 3"><path d="M0 3h5l-2.500 -3z" fill="#000"/></svg>
<svg style="left:1284px;top:137px" width="5" height="3" viewBox="0 0 5 3"><path d="M0 0h5l-2.500 3z" fill="#000"/></svg>
<div style="left:1311px;top:97px;width:306px;height:57px;background:#7b7b7b;"><div style="left:1px;top:1px;width:303px;height:54px;background:#ebebeb;border-radius:5px 5px 0 0;overflow:hidden;box-shadow:1px 1px 0 #a8a8a8;"><div style="left:0;top:0;width:303px;height:17px;background:linear-gradient(90deg,#e1e8f5,#eef2fa);"></div><div style="left:0;top:17px;width:303px;height:1px;background:#a6a6a6;"></div><div style="left:0;top:18px;width:303px;height:1px;background:#fdfdfd;"></div><div class="ph" style="left:6px;top:3px;line-height:14px;white-space:nowrap;">Sensor</div></div></div>
<div style="left:1314px;top:117px;width:293px;height:14px;background:#efefef;"></div>
<div style="left:1318px;top:134px;width:66px;height:14px;background:#efefef;"></div>
<div class="vd" style="left:1316px;top:117px;white-space:nowrap;font-size:12px;line-height:15px;letter-spacing:0.2px;">Simulated sensor</div>
<div class="vd" style="left:1318px;top:134px;white-space:nowrap;font-size:12px;line-height:15px;letter-spacing:0.2px;">Adaptive</div>
<svg style="left:1424px;top:136px" width="13" height="12" viewBox="0 0 13 12"><path d="M0.500 0.500L12 6L0.500 11.500z" fill="#6ad83a" stroke="#3fa01a" stroke-width="0.8"/></svg>
<svg style="left:1588px;top:132px" width="18" height="18" viewBox="0 0 18 18"><defs><linearGradient id="cf1588" x1="0" y1="0" x2="1" y2="1"><stop offset="0" stop-color="#ffffff"/><stop offset="1" stop-color="#8cc8f8"/></linearGradient></defs><path d="M1.200 2.600L11.700 1.200L12.400 15.600L2 17.600z" fill="#1a3c78" opacity="0.550"/><path d="M0.400 1.800L10.950 0.400L11.600 15.050L1.200 16.900z" fill="#1e62c6"/><path d="M10.200 0.500L10.950 0.400L11.600 15.050L10.800 15.200z" fill="#15479a"/><path d="M2.100 4.650L9.400 3.100L10 13.150L2.800 15.050z" fill="url(#cf1588)"/><path d="M3.400 9.400L6.200 11.900L8.100 4.650" stroke="#d8b040" stroke-width="1.700" fill="none" stroke-linejoin="round"/><path d="M9 10.300L15.400 8.300" stroke="#1a3c78" stroke-width="1.600" opacity="0.500"/><path d="M9.200 9.700L15 7.800" stroke="#4a98e4" stroke-width="1.800"/><path d="M9.600 9.200L14.600 7.600" stroke="#b8dcf8" stroke-width="0.600"/><circle cx="15.600" cy="7.300" r="1.200" fill="#d85030"/></svg>
<div style="left:1621px;top:97px;width:120px;height:57px;background:#7b7b7b;"><div style="left:1px;top:1px;width:117px;height:54px;background:#ebebeb;border-radius:5px 5px 0 0;overflow:hidden;box-shadow:1px 1px 0 #a8a8a8;"><div style="left:0;top:0;width:117px;height:17px;background:linear-gradient(90deg,#e1e8f5,#eef2fa);"></div><div style="left:0;top:17px;width:117px;height:1px;background:#a6a6a6;"></div><div style="left:0;top:18px;width:117px;height:1px;background:#fdfdfd;"></div><div class="ph" style="left:6px;top:3px;line-height:14px;white-space:nowrap;">Generator</div></div></div>
<div style="left:1624px;top:118px;width:94px;height:16px;background:#efefef;"></div>
<div class="vd" style="left:1624px;top:117px;white-space:nowrap;font-size:12px;line-height:15px;">DVD manual</div>
<svg style="left:1718px;top:134px" width="18" height="18" viewBox="0 0 18 18"><defs><linearGradient id="cf1718" x1="0" y1="0" x2="1" y2="1"><stop offset="0" stop-color="#ffffff"/><stop offset="1" stop-color="#8cc8f8"/></linearGradient></defs><path d="M1.200 2.600L11.700 1.200L12.400 15.600L2 17.600z" fill="#1a3c78" opacity="0.550"/><path d="M0.400 1.800L10.950 0.400L11.600 15.050L1.200 16.900z" fill="#1e62c6"/><path d="M10.200 0.500L10.950 0.400L11.600 15.050L10.800 15.200z" fill="#15479a"/><path d="M2.100 4.650L9.400 3.100L10 13.150L2.800 15.050z" fill="url(#cf1718)"/><path d="M3.400 9.400L6.200 11.900L8.100 4.650" stroke="#d8b040" stroke-width="1.700" fill="none" stroke-linejoin="round"/><path d="M9 10.300L15.400 8.300" stroke="#1a3c78" stroke-width="1.600" opacity="0.500"/><path d="M9.200 9.700L15 7.800" stroke="#4a98e4" stroke-width="1.800"/><path d="M9.600 9.200L14.600 7.600" stroke="#b8dcf8" stroke-width="0.600"/><circle cx="15.600" cy="7.300" r="1.200" fill="#d85030"/></svg>
<div style="left:1745px;top:97px;width:150px;height:57px;background:#7b7b7b;"><div style="left:1px;top:1px;width:147px;height:54px;background:#ebebeb;border-radius:5px 5px 0 0;overflow:hidden;box-shadow:1px 1px 0 #a8a8a8;"><div style="left:0;top:0;width:147px;height:17px;background:linear-gradient(90deg,#e1e8f5,#eef2fa);"></div><div style="left:0;top:17px;width:147px;height:1px;background:#a6a6a6;"></div><div style="left:0;top:18px;width:147px;height:1px;background:#fdfdfd;"></div><div class="ph" style="left:6px;top:3px;line-height:14px;white-space:nowrap;">Parameters</div></div></div>
<div style="left:1750px;top:117px;width:100px;height:16px;background:#efefef;"></div>
<div style="left:1850px;top:118px;width:34px;height:14px;background:#efefef;"></div>
<div style="left:1750px;top:134px;width:134px;height:16px;background:#efefef;"></div>
<div style="left:1754px;top:119px;width:13px;height:13px;background:#fff;border:1px solid #696969;border-right-color:#fff;border-bottom-color:#fff;"></div>
<div style="left:1755px;top:120px;width:11px;height:11px;border:1px solid #a0a0a0;border-right-color:#e3e3e3;border-bottom-color:#e3e3e3;"></div>
<div style="left:1754px;top:136px;width:13px;height:13px;background:#f0f0f0;border:1px solid #696969;border-right-color:#fff;border-bottom-color:#fff;"></div>
<div style="left:1755px;top:137px;width:11px;height:11px;border:1px solid #b0b0b0;border-right-color:#e3e3e3;border-bottom-color:#e3e3e3;"></div>
<div class="vd" style="left:1773px;top:117px;white-space:nowrap;font-size:12px;line-height:16px;letter-spacing:0.25px;">Reference</div>
<div class="vd" style="left:1773px;top:134px;white-space:nowrap;font-size:12px;line-height:16px;letter-spacing:0.25px;color:#a0a0a0;text-shadow:1px 1px 0 #fff;">XYZ Adjustment</div>
<!--TABLE-->
<div style="left:5px;top:162px;width:1804px;height:216px;background:#7b7b7b;"></div>
<div style="left:6px;top:163px;width:1802px;height:214px;background:#ececec;border:1px solid #00dc00;border-radius:6px 6px 0 0;"></div>
<div style="left:6px;top:163px;width:1796px;height:14px;background:linear-gradient(90deg,#e1e8f5,#eef2fa);border-radius:5px 0 0 0;"></div>
<div style="left:1802px;top:164px;width:5px;height:13px;background:#eef2fa;border-radius:0 5px 0 0;"></div>
<div style="left:6px;top:177px;width:1px;height:2px;background:#ececec;"></div>
<div style="left:15px;top:163px;width:400px;height:14px;overflow:hidden;"><div class="ph" style="left:0;top:2px;font-size:9px;line-height:14px;white-space:nowrap;letter-spacing:-0.050px;">( Average dE: 1.22 [0.79,0.77,0.18] max: 2.52 [CIE2000] )</div></div>
<div style="left:8px;top:177px;width:1782px;height:197px;background:#f0f0f0;border:1px solid #a0a0a0;border-right-color:#fff;border-bottom-color:#fff;"></div>
<div style="left:9px;top:178px;width:1780px;height:195px;border:1px solid #696969;border-right-color:#f0f0f0;border-bottom-color:#f0f0f0;"></div>
<div style="left:10px;top:179px;width:1778px;height:176px;background:#fff;"></div>
<div style="left:11px;top:179px;width:52px;height:21px;background:#f0f0f0;"></div>
<div style="left:11px;top:200px;width:53px;height:1px;background:#696969;"></div>
<div style="left:63px;top:179px;width:1px;height:176px;background:#696969;"></div>
<div style="left:10px;top:179px;width:1px;height:176px;background:#fff;"></div>
<div class="tb" style="left:11px;top:183px;white-space:nowrap;width:52px;line-height:15px;">% Sat</div>
<div style="left:64px;top:179px;width:341px;height:21px;background:#f0f0f0;"></div>
<div style="left:64px;top:200px;width:342px;height:1px;background:#696969;"></div>
<div style="left:405px;top:179px;width:1px;height:22px;background:#696969;"></div>
<div class="tb" style="left:64px;top:183px;white-space:nowrap;width:341px;line-height:15px;">0</div>
<div style="left:406px;top:179px;width:341px;height:21px;background:#f0c3f0;"></div>
<div style="left:406px;top:200px;width:342px;height:1px;background:#696969;"></div>
<div style="left:747px;top:179px;width:1px;height:22px;background:#696969;"></div>
<div class="tb" style="left:406px;top:183px;white-space:nowrap;width:341px;line-height:15px;">25</div>
<div style="left:748px;top:179px;width:340px;height:21px;background:#ef90ef;"></div>
<div style="left:748px;top:200px;width:341px;height:1px;background:#696969;"></div>
<div style="left:1088px;top:179px;width:1px;height:22px;background:#696969;"></div>
<div class="tb" style="left:748px;top:183px;white-space:nowrap;width:340px;line-height:15px;">50</div>
<div style="left:1089px;top:179px;width:340px;height:21px;background:#ee60ee;"></div>
<div style="left:1089px;top:200px;width:341px;height:1px;background:#696969;"></div>
<div style="left:1429px;top:179px;width:1px;height:22px;background:#696969;"></div>
<div class="tb" style="left:1089px;top:183px;white-space:nowrap;width:340px;line-height:15px;">75</div>
<div style="left:1430px;top:179px;width:340px;height:21px;background:#ee30ee;"></div>
<div style="left:1430px;top:200px;width:341px;height:1px;background:#696969;"></div>
<div style="left:1770px;top:179px;width:1px;height:22px;background:#696969;"></div>
<div class="tb" style="left:1430px;top:183px;white-space:nowrap;width:340px;line-height:15px;">100</div>
<div style="left:11px;top:201px;width:52px;height:24px;background:#f0f0f0;"></div>
<div style="left:11px;top:225px;width:52px;height:1px;background:#696969;"></div>
<div class="tb" style="left:11px;top:206px;white-space:nowrap;width:52px;line-height:15px;">x</div>
<div style="left:64px;top:201px;width:341px;height:24px;background:#fff;"></div>
<div style="left:64px;top:225px;width:342px;height:1px;background:#c0c0c0;"></div>
<div style="left:405px;top:201px;width:1px;height:25px;background:#c0c0c0;"></div>
<div class="num" style="left:64px;top:207px;white-space:nowrap;width:340px;line-height:15px;">0.3124</div>
<div style="left:406px;top:201px;width:341px;height:24px;background:#fff;"></div>
<div style="left:406px;top:225px;width:342px;height:1px;background:#c0c0c0;"></div>
<div style="left:747px;top:201px;width:1px;height:25px;background:#c0c0c0;"></div>
<div class="num" style="left:406px;top:207px;white-space:nowrap;width:340px;line-height:15px;">0.3140</div>
<div style="left:748px;top:201px;width:340px;height:24px;background:#fff;"></div>
<div style="left:748px;top:225px;width:341px;height:1px;background:#c0c0c0;"></div>
<div style="left:1088px;top:201px;width:1px;height:25px;background:#c0c0c0;"></div>
<div class="num" style="left:748px;top:207px;white-space:nowrap;width:339px;line-height:15px;">0.3141</div>
<div style="left:1089px;top:201px;width:340px;height:24px;background:#fff;"></div>
<div style="left:1089px;top:225px;width:341px;height:1px;background:#c0c0c0;"></div>
<div style="left:1429px;top:201px;width:1px;height:25px;background:#c0c0c0;"></div>
<div class="num" style="left:1089px;top:207px;white-space:nowrap;width:339px;line-height:15px;">0.3164</div>
<div style="left:1430px;top:201px;width:340px;height:24px;background:#fff;"></div>
<div style="left:1430px;top:225px;width:341px;height:1px;background:#c0c0c0;"></div>
<div style="left:1770px;top:201px;width:1px;height:25px;background:#c0c0c0;"></div>
<div class="num" style="left:1430px;top:207px;white-space:nowrap;width:339px;line-height:15px;">0.3207</div>
<div style="left:11px;top:226px;width:52px;height:24px;background:#f0f0f0;"></div>
<div style="left:11px;top:250px;width:52px;height:1px;background:#696969;"></div>
<div class="tb" style="left:11px;top:231px;white-space:nowrap;width:52px;line-height:15px;">y</div>
<div style="left:64px;top:226px;width:341px;height:24px;background:#fff;"></div>
<div style="left:64px;top:250px;width:342px;height:1px;background:#c0c0c0;"></div>
<div style="left:405px;top:226px;width:1px;height:25px;background:#c0c0c0;"></div>
<div class="num" style="left:64px;top:232px;white-space:nowrap;width:340px;line-height:15px;">0.3289</div>
<div style="left:406px;top:226px;width:341px;height:24px;background:#fff;"></div>
<div style="left:406px;top:250px;width:342px;height:1px;background:#c0c0c0;"></div>
<div style="left:747px;top:226px;width:1px;height:25px;background:#c0c0c0;"></div>
<div class="num" style="left:406px;top:232px;white-space:nowrap;width:340px;line-height:15px;">0.2788</div>
<div style="left:748px;top:226px;width:340px;height:24px;background:#fff;"></div>
<div style="left:748px;top:250px;width:341px;height:1px;background:#c0c0c0;"></div>
<div style="left:1088px;top:226px;width:1px;height:25px;background:#c0c0c0;"></div>
<div class="num" style="left:748px;top:232px;white-space:nowrap;width:339px;line-height:15px;">0.2229</div>
<div style="left:1089px;top:226px;width:340px;height:24px;background:#fff;"></div>
<div style="left:1089px;top:250px;width:341px;height:1px;background:#c0c0c0;"></div>
<div style="left:1429px;top:226px;width:1px;height:25px;background:#c0c0c0;"></div>
<div class="num" style="left:1089px;top:232px;white-space:nowrap;width:339px;line-height:15px;">0.1865</div>
<div style="left:1430px;top:226px;width:340px;height:24px;background:#fff;"></div>
<div style="left:1430px;top:250px;width:341px;height:1px;background:#c0c0c0;"></div>
<div style="left:1770px;top:226px;width:1px;height:25px;background:#c0c0c0;"></div>
<div class="num" style="left:1430px;top:232px;white-space:nowrap;width:339px;line-height:15px;">0.1524</div>
<div style="left:11px;top:251px;width:52px;height:24px;background:#f0f0f0;"></div>
<div style="left:11px;top:275px;width:52px;height:1px;background:#696969;"></div>
<div class="tb" style="left:11px;top:256px;white-space:nowrap;width:52px;line-height:15px;">Y</div>
<div style="left:64px;top:251px;width:341px;height:24px;background:#fff;"></div>
<div style="left:64px;top:275px;width:342px;height:1px;background:#c0c0c0;"></div>
<div style="left:405px;top:251px;width:1px;height:25px;background:#c0c0c0;"></div>
<div class="num" style="left:64px;top:257px;white-space:nowrap;width:340px;line-height:15px;">30.958</div>
<div style="left:406px;top:251px;width:341px;height:24px;background:#fff;"></div>
<div style="left:406px;top:275px;width:342px;height:1px;background:#c0c0c0;"></div>
<div style="left:747px;top:251px;width:1px;height:25px;background:#c0c0c0;"></div>
<div class="num" style="left:406px;top:257px;white-space:nowrap;width:340px;line-height:15px;">30.400</div>
<div style="left:748px;top:251px;width:340px;height:24px;background:#fff;"></div>
<div style="left:748px;top:275px;width:341px;height:1px;background:#c0c0c0;"></div>
<div style="left:1088px;top:251px;width:1px;height:25px;background:#c0c0c0;"></div>
<div class="num" style="left:748px;top:257px;white-space:nowrap;width:339px;line-height:15px;">29.853</div>
<div style="left:1089px;top:251px;width:340px;height:24px;background:#fff;"></div>
<div style="left:1089px;top:275px;width:341px;height:1px;background:#c0c0c0;"></div>
<div style="left:1429px;top:251px;width:1px;height:25px;background:#c0c0c0;"></div>
<div class="num" style="left:1089px;top:257px;white-space:nowrap;width:339px;line-height:15px;">31.118</div>
<div style="left:1430px;top:251px;width:340px;height:24px;background:#fff;"></div>
<div style="left:1430px;top:275px;width:341px;height:1px;background:#c0c0c0;"></div>
<div style="left:1770px;top:251px;width:1px;height:25px;background:#c0c0c0;"></div>
<div class="num" style="left:1430px;top:257px;white-space:nowrap;width:339px;line-height:15px;">32.425</div>
<div style="left:11px;top:276px;width:52px;height:24px;background:#f0f0f0;"></div>
<div style="left:11px;top:300px;width:52px;height:1px;background:#696969;"></div>
<div class="tb" style="left:11px;top:281px;white-space:nowrap;width:52px;line-height:15px;">Delta E</div>
<div style="left:64px;top:276px;width:341px;height:24px;background:#b0ffb0;"></div>
<div style="left:64px;top:300px;width:342px;height:1px;background:#c0c0c0;"></div>
<div style="left:405px;top:276px;width:1px;height:25px;background:#c0c0c0;"></div>
<div class="num" style="left:64px;top:282px;white-space:nowrap;width:340px;line-height:15px;font-weight:bold;font-size:12px;letter-spacing:-0.2px;">0.2</div>
<div style="left:406px;top:276px;width:341px;height:24px;background:#b0ffb0;"></div>
<div style="left:406px;top:300px;width:342px;height:1px;background:#c0c0c0;"></div>
<div style="left:747px;top:276px;width:1px;height:25px;background:#c0c0c0;"></div>
<div class="num" style="left:406px;top:282px;white-space:nowrap;width:340px;line-height:15px;font-weight:bold;font-size:12px;letter-spacing:-0.2px;">1.0</div>
<div style="left:748px;top:276px;width:340px;height:24px;background:#ffffb0;"></div>
<div style="left:748px;top:300px;width:341px;height:1px;background:#c0c0c0;"></div>
<div style="left:1088px;top:276px;width:1px;height:25px;background:#c0c0c0;"></div>
<div class="num" style="left:748px;top:282px;white-space:nowrap;width:339px;line-height:15px;font-weight:bold;font-size:12px;letter-spacing:-0.2px;">2.5</div>
<div style="left:1089px;top:276px;width:340px;height:24px;background:#b0ffb0;"></div>
<div style="left:1089px;top:300px;width:341px;height:1px;background:#c0c0c0;"></div>
<div style="left:1429px;top:276px;width:1px;height:25px;background:#c0c0c0;"></div>
<div class="num" style="left:1089px;top:282px;white-space:nowrap;width:339px;line-height:15px;font-weight:bold;font-size:12px;letter-spacing:-0.2px;">1.1</div>
<div style="left:1430px;top:276px;width:340px;height:24px;background:#b0ffb0;"></div>
<div style="left:1430px;top:300px;width:341px;height:1px;background:#c0c0c0;"></div>
<div style="left:1770px;top:276px;width:1px;height:25px;background:#c0c0c0;"></div>
<div class="num" style="left:1430px;top:282px;white-space:nowrap;width:339px;line-height:15px;font-weight:bold;font-size:12px;letter-spacing:-0.2px;">1.3</div>
<div style="left:11px;top:301px;width:52px;height:24px;background:#f0f0f0;"></div>
<div style="left:11px;top:325px;width:52px;height:1px;background:#696969;"></div>
<div class="tb" style="left:11px;top:306px;white-space:nowrap;width:52px;line-height:15px;">delta xy</div>
<div style="left:64px;top:301px;width:341px;height:24px;background:#f0f0f0;"></div>
<div style="left:64px;top:325px;width:342px;height:1px;background:#c0c0c0;"></div>
<div style="left:405px;top:301px;width:1px;height:25px;background:#c0c0c0;"></div>
<div class="num" style="left:64px;top:307px;white-space:nowrap;width:340px;line-height:15px;">0.0003</div>
<div style="left:406px;top:301px;width:341px;height:24px;background:#f0f0f0;"></div>
<div style="left:406px;top:325px;width:342px;height:1px;background:#c0c0c0;"></div>
<div style="left:747px;top:301px;width:1px;height:25px;background:#c0c0c0;"></div>
<div class="num" style="left:406px;top:307px;white-space:nowrap;width:340px;line-height:15px;">0.0040</div>
<div style="left:748px;top:301px;width:340px;height:24px;background:#f0f0f0;"></div>
<div style="left:748px;top:325px;width:341px;height:1px;background:#c0c0c0;"></div>
<div style="left:1088px;top:301px;width:1px;height:25px;background:#c0c0c0;"></div>
<div class="num" style="left:748px;top:307px;white-space:nowrap;width:339px;line-height:15px;">0.0143</div>
<div style="left:1089px;top:301px;width:340px;height:24px;background:#f0f0f0;"></div>
<div style="left:1089px;top:325px;width:341px;height:1px;background:#c0c0c0;"></div>
<div style="left:1429px;top:301px;width:1px;height:25px;background:#c0c0c0;"></div>
<div class="num" style="left:1089px;top:307px;white-space:nowrap;width:339px;line-height:15px;">0.0067</div>
<div style="left:1430px;top:301px;width:340px;height:24px;background:#f0f0f0;"></div>
<div style="left:1430px;top:325px;width:341px;height:1px;background:#c0c0c0;"></div>
<div style="left:1770px;top:301px;width:1px;height:25px;background:#c0c0c0;"></div>
<div class="num" style="left:1430px;top:307px;white-space:nowrap;width:339px;line-height:15px;">0.0018</div>
<div style="left:11px;top:326px;width:52px;height:24px;background:#f0f0f0;"></div>
<div style="left:11px;top:350px;width:52px;height:1px;background:#696969;"></div>
<div class="tb" style="left:11px;top:331px;white-space:nowrap;width:52px;line-height:15px;">delta L</div>
<div style="left:64px;top:326px;width:341px;height:24px;background:#e0e0e0;"></div>
<div style="left:64px;top:350px;width:342px;height:1px;background:#c0c0c0;"></div>
<div style="left:405px;top:326px;width:1px;height:25px;background:#c0c0c0;"></div>
<div class="num" style="left:64px;top:332px;white-space:nowrap;width:340px;line-height:15px;">+0.5 %</div>
<div style="left:406px;top:326px;width:341px;height:24px;background:#e0e0e0;"></div>
<div style="left:406px;top:350px;width:342px;height:1px;background:#c0c0c0;"></div>
<div style="left:747px;top:326px;width:1px;height:25px;background:#c0c0c0;"></div>
<div class="num" style="left:406px;top:332px;white-space:nowrap;width:340px;line-height:15px;">-2.9 %</div>
<div style="left:748px;top:326px;width:340px;height:24px;background:#e0e0e0;"></div>
<div style="left:748px;top:350px;width:341px;height:1px;background:#c0c0c0;"></div>
<div style="left:1088px;top:326px;width:1px;height:25px;background:#c0c0c0;"></div>
<div class="num" style="left:748px;top:332px;white-space:nowrap;width:339px;line-height:15px;">-5.0 %</div>
<div style="left:1089px;top:326px;width:340px;height:24px;background:#e0e0e0;"></div>
<div style="left:1089px;top:350px;width:341px;height:1px;background:#c0c0c0;"></div>
<div style="left:1429px;top:326px;width:1px;height:25px;background:#c0c0c0;"></div>
<div class="num" style="left:1089px;top:332px;white-space:nowrap;width:339px;line-height:15px;">-3.3 %</div>
<div style="left:1430px;top:326px;width:340px;height:24px;background:#e0e0e0;"></div>
<div style="left:1430px;top:350px;width:341px;height:1px;background:#c0c0c0;"></div>
<div style="left:1770px;top:326px;width:1px;height:25px;background:#c0c0c0;"></div>
<div class="num" style="left:1430px;top:332px;white-space:nowrap;width:339px;line-height:15px;">-5.6 %</div>
<div style="left:11px;top:351px;width:52px;height:4px;background:#f0f0f0;"></div>
<div style="left:64px;top:351px;width:341px;height:4px;background:#f0f0f0;"></div>
<div style="left:405px;top:351px;width:1px;height:4px;background:#c0c0c0;"></div>
<div style="left:406px;top:351px;width:341px;height:4px;background:#f0f0f0;"></div>
<div style="left:747px;top:351px;width:1px;height:4px;background:#c0c0c0;"></div>
<div style="left:748px;top:351px;width:340px;height:4px;background:#f0f0f0;"></div>
<div style="left:1088px;top:351px;width:1px;height:4px;background:#c0c0c0;"></div>
<div style="left:1089px;top:351px;width:340px;height:4px;background:#f0f0f0;"></div>
<div style="left:1429px;top:351px;width:1px;height:4px;background:#c0c0c0;"></div>
<div style="left:1430px;top:351px;width:340px;height:4px;background:#f0f0f0;"></div>
<div style="left:1770px;top:351px;width:1px;height:4px;background:#a0a0a0;"></div>
<div style="left:1771px;top:179px;width:18px;height:176px;background:#f0f0f0;"></div>
<div style="left:1771px;top:179px;width:1px;height:177px;background:#fff;"></div>
<div style="left:1779px;top:195px;width:2px;height:141px;background:#808080;"></div>
<div style="left:10px;top:355px;width:1779px;height:18px;background:#f0f0f0;"></div>
<div style="left:10px;top:355px;width:1762px;height:1px;background:#fff;"></div>
<svg style="left:15px;top:360px" width="7" height="9" viewBox="0 0 7 9"><path d="M6.500 0v8.600l-6.500 -4.300z" fill="#a0a0a0"/></svg>
<svg style="left:1760px;top:360px" width="7" height="9" viewBox="0 0 7 9"><path d="M0 0v8.600l6.500 -4.300z" fill="#a0a0a0"/></svg>
<div style="left:1810px;top:159px;width:2px;height:222px;background:#8c8c8c;"></div>
<div style="left:1895px;top:262px;width:6px;height:122px;background:#8c8c8c;"></div>
<div style="left:1812px;top:262px;width:83px;height:121px;background:#8c8c8c;"></div>
<div style="left:1815px;top:162px;width:80px;height:99px;background:#7b7b7b;"><div style="left:1px;top:1px;width:77px;height:96px;background:#ebebeb;border-radius:5px 5px 0 0;overflow:hidden;box-shadow:1px 1px 0 #a8a8a8;"><div style="left:0;top:0;width:77px;height:17px;background:linear-gradient(90deg,#e1e8f5,#eef2fa);"></div><div style="left:0;top:17px;width:77px;height:1px;background:#a6a6a6;"></div><div style="left:0;top:18px;width:77px;height:1px;background:#fdfdfd;"></div><div class="ph" style="left:6px;top:3px;line-height:14px;white-space:nowrap;">Display</div></div></div>
<div style="left:1821px;top:181px;width:68px;height:15px;background:#efefef;"></div>
<svg style="left:1823px;top:181px" width="12" height="12" viewBox="0 0 12 12"><circle cx="6" cy="6" r="5.200" fill="#f0f0f0"/><path d="M2.100 9.900A5.500 5.500 0 0 1 9.900 2.100" stroke="#696969" stroke-width="1.100" fill="none"/><path d="M2.100 9.900A5.500 5.500 0 0 0 9.900 2.100" stroke="#e8e8e8" stroke-width="1.100" fill="none"/><path d="M2.900 9.100A4.400 4.400 0 0 1 9.100 2.900" stroke="#a0a0a0" stroke-width="0.800" fill="none"/></svg>
<div class="vd" style="left:1841px;top:181px;white-space:nowrap;font-size:12px;line-height:15px;letter-spacing:0.2px;color:#a0a0a0;text-shadow:1px 1px 0 #fff;">Sensor</div>
<div style="left:1821px;top:197px;width:68px;height:15px;background:#efefef;"></div>
<svg style="left:1823px;top:197px" width="12" height="12" viewBox="0 0 12 12"><circle cx="6" cy="6" r="5.200" fill="#fff"/><path d="M2.100 9.900A5.500 5.500 0 0 1 9.900 2.100" stroke="#696969" stroke-width="1.100" fill="none"/><path d="M2.100 9.900A5.500 5.500 0 0 0 9.900 2.100" stroke="#e8e8e8" stroke-width="1.100" fill="none"/><path d="M2.900 9.100A4.400 4.400 0 0 1 9.100 2.900" stroke="#a0a0a0" stroke-width="0.800" fill="none"/></svg>
<div class="vd" style="left:1841px;top:197px;white-space:nowrap;font-size:12px;line-height:15px;letter-spacing:0.2px;">RGB</div>
<div style="left:1821px;top:213px;width:68px;height:15px;background:#efefef;"></div>
<svg style="left:1823px;top:213px" width="12" height="12" viewBox="0 0 12 12"><circle cx="6" cy="6" r="5.200" fill="#fff"/><path d="M2.100 9.900A5.500 5.500 0 0 1 9.900 2.100" stroke="#696969" stroke-width="1.100" fill="none"/><path d="M2.100 9.900A5.500 5.500 0 0 0 9.900 2.100" stroke="#e8e8e8" stroke-width="1.100" fill="none"/><path d="M2.900 9.100A4.400 4.400 0 0 1 9.100 2.900" stroke="#a0a0a0" stroke-width="0.800" fill="none"/></svg>
<div class="vd" style="left:1841px;top:213px;white-space:nowrap;font-size:12px;line-height:15px;letter-spacing:0.2px;">XYZ</div>
<div style="left:1821px;top:229px;width:68px;height:15px;background:#efefef;"></div>
<svg style="left:1823px;top:229px" width="12" height="12" viewBox="0 0 12 12"><circle cx="6" cy="6" r="5.200" fill="#fff"/><path d="M2.100 9.900A5.500 5.500 0 0 1 9.900 2.100" stroke="#696969" stroke-width="1.100" fill="none"/><path d="M2.100 9.900A5.500 5.500 0 0 0 9.900 2.100" stroke="#e8e8e8" stroke-width="1.100" fill="none"/><path d="M2.900 9.100A4.400 4.400 0 0 1 9.100 2.900" stroke="#a0a0a0" stroke-width="0.800" fill="none"/></svg>
<div class="vd" style="left:1841px;top:229px;white-space:nowrap;font-size:12px;line-height:15px;letter-spacing:0.2px;">xyz</div>
<div style="left:1821px;top:244px;width:68px;height:15px;background:#efefef;"></div>
<svg style="left:1823px;top:244px" width="12" height="12" viewBox="0 0 12 12"><circle cx="6" cy="6" r="5.200" fill="#fff"/><path d="M2.100 9.900A5.500 5.500 0 0 1 9.900 2.100" stroke="#696969" stroke-width="1.100" fill="none"/><path d="M2.100 9.900A5.500 5.500 0 0 0 9.900 2.100" stroke="#e8e8e8" stroke-width="1.100" fill="none"/><path d="M2.900 9.100A4.400 4.400 0 0 1 9.100 2.900" stroke="#a0a0a0" stroke-width="0.800" fill="none"/><circle cx="6" cy="6" r="2" fill="#000"/></svg>
<div class="vd" style="left:1841px;top:244px;white-space:nowrap;font-size:12px;line-height:15px;letter-spacing:0.2px;">xyY</div>
<div style="left:1812px;top:264px;width:83px;height:30px;background:#ececec;border:1px solid #fff;border-right-color:#8c8c8c;border-bottom-color:#8c8c8c;"></div>
<div style="left:1813px;top:265px;width:81px;height:28px;border:1px solid #f4f4f4;border-right-color:#b4b4b4;border-bottom-color:#b4b4b4;"></div>
<div class="vd" style="left:1863px;top:271px;white-space:nowrap;font-size:12px;line-height:16px;letter-spacing:0.25px;">Go</div>
<div style="left:1812px;top:294px;width:83px;height:30px;background:#ececec;border:1px solid #fff;border-right-color:#8c8c8c;border-bottom-color:#8c8c8c;"></div>
<div style="left:1813px;top:295px;width:81px;height:28px;border:1px solid #f4f4f4;border-right-color:#b4b4b4;border-bottom-color:#b4b4b4;"></div>
<div class="vd" style="left:1851px;top:301px;white-space:nowrap;font-size:12px;line-height:16px;letter-spacing:0.25px;">Delete</div>
<div style="left:1812px;top:324px;width:83px;height:30px;background:#ececec;border:1px solid #fff;border-right-color:#8c8c8c;border-bottom-color:#8c8c8c;"></div>
<div style="left:1813px;top:325px;width:81px;height:28px;border:1px solid #f4f4f4;border-right-color:#b4b4b4;border-bottom-color:#b4b4b4;"></div>
<div class="vd" style="left:1858px;top:331px;white-space:nowrap;font-size:12px;line-height:16px;letter-spacing:0.25px;">Refs</div>
<svg style="left:1818px;top:266px" width="33" height="28" viewBox="0 0 33 28"><rect x="1" y="1" width="30" height="26" fill="#b0b0b0"/><rect x="0" y="1" width="2" height="1" fill="#000"/><rect x="30" y="4" width="2" height="1" fill="#000"/><rect x="0" y="3" width="2" height="1" fill="#000"/><rect x="30" y="6" width="2" height="1" fill="#000"/><rect x="0" y="5" width="2" height="1" fill="#000"/><rect x="30" y="8" width="2" height="1" fill="#000"/><rect x="0" y="7" width="2" height="1" fill="#000"/><rect x="30" y="10" width="2" height="1" fill="#000"/><rect x="0" y="9" width="2" height="1" fill="#000"/><rect x="30" y="12" width="2" height="1" fill="#000"/><rect x="0" y="11" width="2" height="1" fill="#000"/><rect x="30" y="14" width="2" height="1" fill="#000"/><rect x="0" y="13" width="2" height="1" fill="#000"/><rect x="30" y="16" width="2" height="1" fill="#000"/><rect x="0" y="15" width="2" height="1" fill="#000"/><rect x="30" y="18" width="2" height="1" fill="#000"/><rect x="0" y="17" width="2" height="1" fill="#000"/><rect x="30" y="20" width="2" height="1" fill="#000"/><rect x="0" y="19" width="2" height="1" fill="#000"/><rect x="30" y="22" width="2" height="1" fill="#000"/><rect x="0" y="21" width="2" height="1" fill="#000"/><rect x="30" y="24" width="2" height="1" fill="#000"/><rect x="0" y="23" width="2" height="1" fill="#000"/><rect x="30" y="26" width="2" height="1" fill="#000"/><rect x="0" y="25" width="2" height="1" fill="#000"/><rect x="30" y="28" width="2" height="1" fill="#000"/><rect x="0" y="1" width="1" height="26" fill="#000"/><rect x="31" y="4" width="1" height="24" fill="#000"/><path d="M2.500 5.500h4v2.500h-2v2.500h3v3h-3v2.500h2v3h3v2.500h-7z" fill="#c8c8c8" stroke="#686868" stroke-width="0.700"/><path d="M29.500 5h-4.500v2.500h2.500v3h-3v3h3v3h-2.500v3h4.500" fill="#c8c8c8" stroke="#686868" stroke-width="0.700"/><path d="M4.500 0.500h16q3.500 4 3 9q0 5 4 8l4 1.500q-1 5 -6 9h-11l-3.500 -3q-2.500 -6 -2 -12q0 -6 -4.500 -12.500z" fill="#a010c4" stroke="#60088a" stroke-width="0.800"/><path d="M10 9.500l10 -5l2 6.500l-10 5.500zM13.500 19.500l9 -6l5 5.500l-9 7z" fill="#bc30e4" stroke="#7a10a0" stroke-width="0.700"/><path d="M19 22l4.500 -3l2 2.500l-4.500 3.500z" fill="#d880ff"/><path d="M9.500 2.500q4 5 3.500 11q0 6 3 11" stroke="#7a10a0" stroke-width="0.700" fill="none" stroke-dasharray="1 1.500"/></svg>
<svg style="left:1819px;top:296px" width="29" height="27" viewBox="0 0 29 27"><defs><linearGradient id="bin" x1="0" y1="0" x2="1" y2="1"><stop offset="0" stop-color="#e8f8ff"/><stop offset="0.5" stop-color="#a8d8f8"/><stop offset="1" stop-color="#58a0e0"/></linearGradient></defs><path d="M0.500 5q13 -6 27 -4.500l-3 19q-8 6 -18 5.500z" fill="url(#bin)" stroke="#88b8e0" stroke-width="0.600"/><path d="M1 5q13 -5.500 26.500 -4q-6 3 -13 3.500q-7 1 -13.500 0.500z" fill="#78b0e8" opacity="0.800"/><ellipse cx="14" cy="21.500" rx="9" ry="3.500" fill="#c8e8fc" opacity="0.700"/><path d="M14 9q4 -3 7 0l1.500 -1.500v5h-5l1.500 -1.500q-2 -1.500 -4 0zM22 16q-4 3.500 -7.500 0.500l-1.500 1.500v-5h5l-1.500 1.500q2 1.500 4 0z" fill="#20a838" stroke="#107020" stroke-width="0.500"/></svg>
<svg style="left:1818px;top:329px" width="32" height="23" viewBox="0 0 32 23" shape-rendering="crispEdges"><rect x="0" y="11" width="1" height="1" fill="#ffff00"/><rect x="0" y="12" width="1" height="10" fill="#000080"/><rect x="1" y="10" width="1" height="1" fill="#ffff00"/><rect x="1" y="11" width="1" height="11" fill="#000080"/><rect x="2" y="10" width="1" height="1" fill="#ffff00"/><rect x="2" y="11" width="1" height="11" fill="#ff00ff"/><rect x="3" y="8" width="1" height="1" fill="#ffff00"/><rect x="3" y="9" width="1" height="13" fill="#ff00ff"/><rect x="4" y="7" width="1" height="1" fill="#ffff00"/><rect x="4" y="8" width="1" height="14" fill="#0000ff"/><rect x="5" y="4" width="1" height="1" fill="#ffff00"/><rect x="5" y="5" width="1" height="17" fill="#0000ff"/><rect x="6" y="3" width="1" height="1" fill="#ffff00"/><rect x="6" y="4" width="1" height="18" fill="#0000ff"/><rect x="7" y="4" width="1" height="1" fill="#ffff00"/><rect x="7" y="5" width="1" height="17" fill="#0000ff"/><rect x="8" y="6" width="1" height="1" fill="#ffff00"/><rect x="8" y="7" width="1" height="15" fill="#00ffff"/><rect x="9" y="8" width="1" height="1" fill="#ffff00"/><rect x="9" y="9" width="1" height="13" fill="#00ffff"/><rect x="10" y="8" width="1" height="1" fill="#ffff00"/><rect x="10" y="9" width="1" height="13" fill="#00ffff"/><rect x="11" y="10" width="1" height="1" fill="#ffff00"/><rect x="11" y="11" width="1" height="11" fill="#00ff00"/><rect x="12" y="9" width="1" height="1" fill="#ffff00"/><rect x="12" y="10" width="1" height="12" fill="#00ff00"/><rect x="13" y="8" width="1" height="1" fill="#ffff00"/><rect x="13" y="9" width="1" height="13" fill="#00ff00"/><rect x="14" y="8" width="1" height="1" fill="#ffff00"/><rect x="14" y="9" width="1" height="13" fill="#00ff00"/><rect x="15" y="6" width="1" height="1" fill="#ffff00"/><rect x="15" y="7" width="1" height="15" fill="#ffff00"/><rect x="16" y="4" width="1" height="1" fill="#ffff00"/><rect x="16" y="5" width="1" height="17" fill="#ffff00"/><rect x="17" y="2" width="1" height="1" fill="#ffff00"/><rect x="17" y="3" width="1" height="19" fill="#ffff00"/><rect x="18" y="0" width="1" height="1" fill="#ffff00"/><rect x="18" y="1" width="1" height="21" fill="#ffff00"/><rect x="19" y="2" width="1" height="1" fill="#ffff00"/><rect x="19" y="3" width="1" height="19" fill="#ffff00"/><rect x="20" y="3" width="1" height="1" fill="#ffff00"/><rect x="20" y="4" width="1" height="18" fill="#ffff00"/><rect x="21" y="4" width="1" height="1" fill="#ffff00"/><rect x="21" y="5" width="1" height="17" fill="#800000"/><rect x="22" y="6" width="1" height="1" fill="#ffff00"/><rect x="22" y="7" width="1" height="15" fill="#800000"/><rect x="23" y="8" width="1" height="1" fill="#ffff00"/><rect x="23" y="9" width="1" height="13" fill="#800000"/><rect x="24" y="9" width="1" height="1" fill="#ffff00"/><rect x="24" y="10" width="1" height="12" fill="#800000"/><rect x="25" y="10" width="1" height="1" fill="#ffff00"/><rect x="25" y="11" width="1" height="11" fill="#ff0000"/><rect x="26" y="9" width="1" height="1" fill="#ffff00"/><rect x="26" y="10" width="1" height="12" fill="#ff0000"/><rect x="27" y="8" width="1" height="1" fill="#ffff00"/><rect x="27" y="9" width="1" height="13" fill="#ff0000"/><rect x="28" y="8" width="1" height="1" fill="#ffff00"/><rect x="28" y="9" width="1" height="13" fill="#ff0000"/><rect x="29" y="8" width="1" height="1" fill="#ffff00"/><rect x="29" y="9" width="1" height="13" fill="#ff0000"/><rect x="30" y="10" width="1" height="1" fill="#ffff00"/><rect x="30" y="11" width="1" height="11" fill="#ff0000"/><rect x="31" y="10" width="1" height="1" fill="#ffff00"/><rect x="31" y="11" width="1" height="11" fill="#ff0000"/></svg>
<div style="left:1818px;top:358px;width:56px;height:18px;background:#ececec;"></div>
<div style="left:1819px;top:360px;width:13px;height:13px;background:#fff;border:1px solid #696969;border-right-color:#fff;border-bottom-color:#fff;"></div>
<div style="left:1820px;top:361px;width:11px;height:11px;border:1px solid #a0a0a0;border-right-color:#e3e3e3;border-bottom-color:#e3e3e3;"></div>
<div class="vd" style="left:1837px;top:358px;white-space:nowrap;font-size:12px;line-height:16px;letter-spacing:0.25px;">Edit</div>
<div style="left:2px;top:379px;width:1895px;height:1px;background:#a4a4a4;"></div>
<div style="left:2px;top:380px;width:1895px;height:2px;background:#6e6e6e;"></div>
<div style="left:2px;top:381px;width:1899px;height:3px;background:#8c8c8c;"></div>
<!--BOTTOM-->
<div style="left:384px;top:384px;width:1px;height:634px;background:#696969;"></div>
<div style="left:385px;top:384px;width:3px;height:634px;background:#8c8c8c;"></div>
<div style="left:5px;top:387px;width:378px;height:629px;background:#7b7b7b;"><div style="left:1px;top:1px;width:375px;height:626px;background:#ebebeb;border-radius:5px 5px 0 0;overflow:hidden;box-shadow:1px 1px 0 #a8a8a8;"><div style="left:0;top:0;width:375px;height:17px;background:linear-gradient(90deg,#e1e8f5,#eef2fa);"></div><div style="left:0;top:17px;width:375px;height:1px;background:#a6a6a6;"></div><div style="left:0;top:18px;width:375px;height:1px;background:#fdfdfd;"></div><div class="ph" style="left:6px;top:3px;line-height:14px;white-space:nowrap;">Selected color</div></div></div>
<div style="left:14px;top:409px;width:114px;height:15px;background:#efefef;"></div>
<div class="vd" style="left:18px;top:409px;white-space:nowrap;font-size:12px;line-height:15px;letter-spacing:0.2px;">RGB Levels</div>
<div style="left:230px;top:407px;width:128px;height:15px;background:#efefef;"></div>
<div class="vd" style="left:241px;top:407px;white-space:nowrap;font-size:12px;line-height:15px;letter-spacing:0.420px;">Current Measure</div>
<div style="left:14px;top:433px;width:201px;height:86px;background:#efefef;"></div>
<svg style="left:14px;top:433px" width="201" height="86" viewBox="0 0 201 86" shape-rendering="crispEdges"><path d="M0 44.500H201" stroke="#808080" stroke-width="1" stroke-dasharray="3 3"/></svg>
<svg style="left:14px;top:505px;overflow:hidden" width="201" height="14" viewBox="0 0 201 14"><g stroke="#000" stroke-width="1.300"><path d="M0 9.500C10 3.500 40 3.500 50 9.500z" fill="#b40000"/><path d="M51 9.500C61 3.500 91 3.500 101 9.500z" fill="#00a000"/><path d="M102 9.500C112 3.500 142 3.500 152 9.500z" fill="#0000b4"/><path d="M153 9.500C163 3.500 193 3.500 203 9.500z" fill="#c08a00"/></g><rect x="0" y="9" width="200" height="5" fill="#000"/></svg>
<div class="tm" style="left:14px;top:496px;white-space:nowrap;width:50px;text-align:center;font-weight:bold;font-size:11.500px;line-height:13px;color:#101020;">0.0%</div>
<div class="tm" style="left:65px;top:496px;white-space:nowrap;width:50px;text-align:center;font-weight:bold;font-size:11.500px;line-height:13px;color:#101020;">0.0%</div>
<div class="tm" style="left:116px;top:496px;white-space:nowrap;width:50px;text-align:center;font-weight:bold;font-size:11.500px;line-height:13px;color:#101020;">0.0%</div>
<div class="tm" style="left:167px;top:496px;white-space:nowrap;width:50px;text-align:center;font-weight:bold;font-size:11.500px;line-height:13px;color:#101020;">dE 0.0</div>
<div style="left:16px;top:533px;width:192px;height:74px;background:#f0f0f0;"></div>
<div style="left:35px;top:534px;white-space:nowrap;font-weight:bold;font-size:13px;line-height:16px;letter-spacing:0.45px;">Measure</div>
<div style="left:127px;top:534px;white-space:nowrap;font-weight:bold;font-size:13px;line-height:16px;letter-spacing:0.45px;">Reference</div>
<div style="left:14px;top:622px;width:46px;height:15px;background:#efefef;"></div>
<div class="vd" style="left:18px;top:622px;white-space:nowrap;font-size:12px;line-height:15px;letter-spacing:0.2px;">Target</div>
<div style="left:50px;top:638px;width:116px;height:89px;border:1px solid #000;background:conic-gradient(from 0deg at 50% 50%,#50ff00 0deg,#a0ff00 25deg,#ffc000 52deg,#ff4000 75deg,#ff0000 92deg,#ff0060 115deg,#ff0090 128deg,#c000b0 155deg,#8000d0 180deg,#3000ff 215deg,#0000ff 232deg,#0050e0 255deg,#0098c8 272deg,#00d0c0 295deg,#00ffb0 308deg,#00ff50 335deg,#50ff00 360deg);"></div>
<svg style="left:50px;top:638px" width="116" height="89" viewBox="0 0 116 89"><rect x="17.500" y="13.500" width="81" height="62" rx="7" fill="#000" stroke="#fff" stroke-width="1"/><path d="M15 44.500H102M58.500 13V76" stroke="#fff" stroke-width="1" stroke-dasharray="3 2" shape-rendering="crispEdges"/><ellipse cx="58.500" cy="44.500" rx="21" ry="15" fill="none" stroke="#fff" stroke-width="1" stroke-dasharray="3 2"/></svg>
<div style="left:220px;top:430px;width:153px;height:578px;background:#a0a0a0;border:1px solid #a0a0a0;border-right-color:#fff;border-bottom-color:#fff;"></div>
<div style="left:221px;top:431px;width:151px;height:576px;border:1px solid #696969;border-right-color:#e3e3e3;border-bottom-color:#e3e3e3;"></div>
<div style="left:222px;top:432px;width:58px;height:22px;background:#f0f0f0;"></div>
<div style="left:222px;top:454px;width:59px;height:1px;background:#696969;"></div>
<div style="left:281px;top:432px;width:73px;height:22px;background:#fff;"></div>
<div style="left:281px;top:454px;width:74px;height:1px;background:#c0c0c0;"></div>
<div class="tb" style="left:222px;top:437px;white-space:nowrap;width:58px;line-height:15px;">Y cd/m<sup style="font-size:8px;line-height:0;vertical-align:5px;">2</sup></div>
<div style="left:222px;top:455px;width:58px;height:22px;background:#f0f0f0;"></div>
<div style="left:222px;top:477px;width:59px;height:1px;background:#696969;"></div>
<div style="left:281px;top:455px;width:73px;height:22px;background:#fff;"></div>
<div style="left:281px;top:477px;width:74px;height:1px;background:#c0c0c0;"></div>
<div class="tb" style="left:222px;top:460px;white-space:nowrap;width:58px;line-height:15px;">Y ftL</div>
<div style="left:222px;top:478px;width:58px;height:22px;background:#f0f0f0;"></div>
<div style="left:222px;top:500px;width:59px;height:1px;background:#696969;"></div>
<div style="left:281px;top:478px;width:73px;height:22px;background:#fff;"></div>
<div style="left:281px;top:500px;width:74px;height:1px;background:#c0c0c0;"></div>
<div class="tb" style="left:222px;top:483px;white-space:nowrap;width:58px;line-height:15px;">T°</div>
<div style="left:222px;top:501px;width:58px;height:22px;background:#f0f0f0;"></div>
<div style="left:222px;top:523px;width:59px;height:1px;background:#696969;"></div>
<div style="left:281px;top:501px;width:73px;height:22px;background:#e0e0e0;"></div>
<div style="left:281px;top:523px;width:74px;height:1px;background:#c0c0c0;"></div>
<div class="tb" style="left:222px;top:506px;white-space:nowrap;width:58px;line-height:15px;">X</div>
<div style="left:222px;top:524px;width:58px;height:22px;background:#f0f0f0;"></div>
<div style="left:222px;top:546px;width:59px;height:1px;background:#696969;"></div>
<div style="left:281px;top:524px;width:73px;height:22px;background:#e0e0e0;"></div>
<div style="left:281px;top:546px;width:74px;height:1px;background:#c0c0c0;"></div>
<div class="tb" style="left:222px;top:529px;white-space:nowrap;width:58px;line-height:15px;">Y</div>
<div style="left:222px;top:547px;width:58px;height:22px;background:#f0f0f0;"></div>
<div style="left:222px;top:569px;width:59px;height:1px;background:#696969;"></div>
<div style="left:281px;top:547px;width:73px;height:22px;background:#e0e0e0;"></div>
<div style="left:281px;top:569px;width:74px;height:1px;background:#c0c0c0;"></div>
<div class="tb" style="left:222px;top:552px;white-space:nowrap;width:58px;line-height:15px;">Z</div>
<div style="left:222px;top:570px;width:58px;height:22px;background:#f0f0f0;"></div>
<div style="left:222px;top:592px;width:59px;height:1px;background:#696969;"></div>
<div style="left:281px;top:570px;width:73px;height:22px;background:#fff;"></div>
<div style="left:281px;top:592px;width:74px;height:1px;background:#c0c0c0;"></div>
<div class="tb" style="left:222px;top:575px;white-space:nowrap;width:58px;line-height:15px;">R</div>
<div style="left:222px;top:593px;width:58px;height:22px;background:#f0f0f0;"></div>
<div style="left:222px;top:615px;width:59px;height:1px;background:#696969;"></div>
<div style="left:281px;top:593px;width:73px;height:22px;background:#fff;"></div>
<div style="left:281px;top:615px;width:74px;height:1px;background:#c0c0c0;"></div>
<div class="tb" style="left:222px;top:598px;white-space:nowrap;width:58px;line-height:15px;">G</div>
<div style="left:222px;top:616px;width:58px;height:22px;background:#f0f0f0;"></div>
<div style="left:222px;top:638px;width:59px;height:1px;background:#696969;"></div>
<div style="left:281px;top:616px;width:73px;height:22px;background:#fff;"></div>
<div style="left:281px;top:638px;width:74px;height:1px;background:#c0c0c0;"></div>
<div class="tb" style="left:222px;top:621px;white-space:nowrap;width:58px;line-height:15px;">B</div>
<div style="left:222px;top:639px;width:58px;height:22px;background:#f0f0f0;"></div>
<div style="left:222px;top:661px;width:59px;height:1px;background:#696969;"></div>
<div style="left:281px;top:639px;width:73px;height:22px;background:#e0e0e0;"></div>
<div style="left:281px;top:661px;width:74px;height:1px;background:#c0c0c0;"></div>
<div class="tb" style="left:222px;top:644px;white-space:nowrap;width:58px;line-height:15px;">x</div>
<div style="left:222px;top:662px;width:58px;height:22px;background:#f0f0f0;"></div>
<div style="left:222px;top:684px;width:59px;height:1px;background:#696969;"></div>
<div style="left:281px;top:662px;width:73px;height:22px;background:#e0e0e0;"></div>
<div style="left:281px;top:684px;width:74px;height:1px;background:#c0c0c0;"></div>
<div class="tb" style="left:222px;top:667px;white-space:nowrap;width:58px;line-height:15px;">y</div>
<div style="left:222px;top:685px;width:58px;height:22px;background:#f0f0f0;"></div>
<div style="left:222px;top:707px;width:59px;height:1px;background:#696969;"></div>
<div style="left:281px;top:685px;width:73px;height:22px;background:#e0e0e0;"></div>
<div style="left:281px;top:707px;width:74px;height:1px;background:#c0c0c0;"></div>
<div class="tb" style="left:222px;top:690px;white-space:nowrap;width:58px;line-height:15px;">Y</div>
<div style="left:222px;top:708px;width:58px;height:22px;background:#f0f0f0;"></div>
<div style="left:222px;top:730px;width:59px;height:1px;background:#696969;"></div>
<div style="left:281px;top:708px;width:73px;height:22px;background:#fff;"></div>
<div style="left:281px;top:730px;width:74px;height:1px;background:#c0c0c0;"></div>
<div class="tb" style="left:222px;top:713px;white-space:nowrap;width:58px;line-height:15px;">x</div>
<div style="left:222px;top:731px;width:58px;height:22px;background:#f0f0f0;"></div>
<div style="left:222px;top:753px;width:59px;height:1px;background:#696969;"></div>
<div style="left:281px;top:731px;width:73px;height:22px;background:#fff;"></div>
<div style="left:281px;top:753px;width:74px;height:1px;background:#c0c0c0;"></div>
<div class="tb" style="left:222px;top:736px;white-space:nowrap;width:58px;line-height:15px;">y</div>
<div style="left:222px;top:754px;width:58px;height:22px;background:#f0f0f0;"></div>
<div style="left:222px;top:776px;width:59px;height:1px;background:#696969;"></div>
<div style="left:281px;top:754px;width:73px;height:22px;background:#fff;"></div>
<div style="left:281px;top:776px;width:74px;height:1px;background:#c0c0c0;"></div>
<div class="tb" style="left:222px;top:759px;white-space:nowrap;width:58px;line-height:15px;">z</div>
<div style="left:222px;top:777px;width:58px;height:22px;background:#f0f0f0;"></div>
<div style="left:222px;top:799px;width:59px;height:1px;background:#696969;"></div>
<div style="left:281px;top:777px;width:73px;height:22px;background:#e0e0e0;"></div>
<div style="left:281px;top:799px;width:74px;height:1px;background:#c0c0c0;"></div>
<div class="tb" style="left:222px;top:782px;white-space:nowrap;width:58px;line-height:15px;">L</div>
<div style="left:222px;top:800px;width:58px;height:22px;background:#f0f0f0;"></div>
<div style="left:222px;top:822px;width:59px;height:1px;background:#696969;"></div>
<div style="left:281px;top:800px;width:73px;height:22px;background:#e0e0e0;"></div>
<div style="left:281px;top:822px;width:74px;height:1px;background:#c0c0c0;"></div>
<div class="tb" style="left:222px;top:805px;white-space:nowrap;width:58px;line-height:15px;">a</div>
<div style="left:222px;top:823px;width:58px;height:22px;background:#f0f0f0;"></div>
<div style="left:222px;top:845px;width:59px;height:1px;background:#696969;"></div>
<div style="left:281px;top:823px;width:73px;height:22px;background:#e0e0e0;"></div>
<div style="left:281px;top:845px;width:74px;height:1px;background:#c0c0c0;"></div>
<div class="tb" style="left:222px;top:828px;white-space:nowrap;width:58px;line-height:15px;">b</div>
<div style="left:222px;top:846px;width:58px;height:22px;background:#f0f0f0;"></div>
<div style="left:222px;top:868px;width:59px;height:1px;background:#696969;"></div>
<div style="left:281px;top:846px;width:73px;height:22px;background:#fff;"></div>
<div style="left:281px;top:868px;width:74px;height:1px;background:#c0c0c0;"></div>
<div class="tb" style="left:222px;top:851px;white-space:nowrap;width:58px;line-height:15px;">L</div>
<div style="left:222px;top:869px;width:58px;height:22px;background:#f0f0f0;"></div>
<div style="left:222px;top:891px;width:59px;height:1px;background:#696969;"></div>
<div style="left:281px;top:869px;width:73px;height:22px;background:#fff;"></div>
<div style="left:281px;top:891px;width:74px;height:1px;background:#c0c0c0;"></div>
<div class="tb" style="left:222px;top:874px;white-space:nowrap;width:58px;line-height:15px;">C</div>
<div style="left:222px;top:892px;width:58px;height:22px;background:#f0f0f0;"></div>
<div style="left:222px;top:914px;width:59px;height:1px;background:#696969;"></div>
<div style="left:281px;top:892px;width:73px;height:22px;background:#fff;"></div>
<div style="left:281px;top:914px;width:74px;height:1px;background:#c0c0c0;"></div>
<div class="tb" style="left:222px;top:897px;white-space:nowrap;width:58px;line-height:15px;">H</div>
<div style="left:222px;top:915px;width:58px;height:22px;background:#f0f0f0;"></div>
<div style="left:222px;top:937px;width:59px;height:1px;background:#696969;"></div>
<div style="left:281px;top:915px;width:73px;height:22px;background:#e0e0e0;"></div>
<div style="left:281px;top:937px;width:74px;height:1px;background:#c0c0c0;"></div>
<div class="tb" style="left:222px;top:920px;white-space:nowrap;width:58px;line-height:15px;">L</div>
<div style="left:222px;top:938px;width:58px;height:22px;background:#f0f0f0;"></div>
<div style="left:222px;top:960px;width:59px;height:1px;background:#696969;"></div>
<div style="left:281px;top:938px;width:73px;height:22px;background:#e0e0e0;"></div>
<div style="left:281px;top:960px;width:74px;height:1px;background:#c0c0c0;"></div>
<div class="tb" style="left:222px;top:943px;white-space:nowrap;width:58px;line-height:15px;">M</div>
<div style="left:222px;top:961px;width:58px;height:22px;background:#f0f0f0;"></div>
<div style="left:222px;top:983px;width:59px;height:1px;background:#696969;"></div>
<div style="left:281px;top:961px;width:73px;height:22px;background:#e0e0e0;"></div>
<div style="left:281px;top:983px;width:74px;height:1px;background:#c0c0c0;"></div>
<div class="tb" style="left:222px;top:966px;white-space:nowrap;width:58px;line-height:15px;">S</div>
<div style="left:222px;top:432px;width:1px;height:552px;background:#fff;"></div>
<div style="left:280px;top:432px;width:1px;height:552px;background:#696969;"></div>
<div style="left:354px;top:432px;width:1px;height:552px;background:#c0c0c0;"></div>
<div style="left:355px;top:432px;width:17px;height:574px;background:#f0f0f0;"></div>
<svg style="left:360px;top:437px" width="9" height="6" viewBox="0 0 9 6"><path d="M0 6h9l-4.500 -6z" fill="#a8a8a8"/></svg>
<svg style="left:360px;top:996px" width="9" height="6" viewBox="0 0 9 6"><path d="M0 0h9l-4.500 6z" fill="#a8a8a8"/></svg>
<div style="left:391px;top:387px;width:1504px;height:629px;background:#7b7b7b;"><div style="left:1px;top:1px;width:1501px;height:626px;background:#ebebeb;border-radius:5px 5px 0 0;overflow:hidden;box-shadow:1px 1px 0 #a8a8a8;"><div style="left:0;top:0;width:1501px;height:17px;background:linear-gradient(90deg,#e1e8f5,#eef2fa);"></div><div style="left:0;top:17px;width:1501px;height:1px;background:#a6a6a6;"></div><div style="left:0;top:18px;width:1501px;height:1px;background:#fdfdfd;"></div><div class="ph" style="left:6px;top:3px;line-height:14px;white-space:nowrap;">Information</div></div></div>
<div style="left:396px;top:409px;width:303px;height:22px;background:#fff;border:1px solid #696969;border-right-color:#fff;border-bottom-color:#fff;"></div>
<div style="left:397px;top:410px;width:301px;height:20px;border:1px solid #a0a0a0;border-right-color:#e3e3e3;border-bottom-color:#e3e3e3;"></div>
<div style="left:400px;top:413px;width:279px;height:16px;background:#0078d7;"></div>
<div class="vd" style="left:400px;top:413px;white-space:nowrap;font-size:12px;line-height:15px;color:#fff;letter-spacing:0.27px;">Saturation Luminance - Shift</div>
<div style="left:680px;top:411px;width:17px;height:18px;background:#f0f0f0;border:1px solid #fff;border-right-color:#696969;border-bottom-color:#696969;"></div>
<div style="left:681px;top:412px;width:15px;height:16px;border:1px solid #f0f0f0;border-right-color:#a0a0a0;border-bottom-color:#a0a0a0;"></div>
<svg style="left:685px;top:419px" width="7" height="4" viewBox="0 0 7 4"><path d="M0 0h7l-3.500 4z" fill="#000"/></svg>
<!--CHARTS-->
<div style="left:398px;top:439px;width:746px;height:1px;background:#b4b4b4;"></div>
<div style="left:398px;top:439px;width:1px;height:568px;background:#b4b4b4;"></div>
<div style="left:399px;top:440px;width:745px;height:1px;background:#696969;"></div>
<div style="left:399px;top:440px;width:1px;height:567px;background:#696969;"></div>
<div style="left:400px;top:441px;width:743px;height:1px;background:#a0a0a0;"></div>
<div style="left:400px;top:441px;width:1px;height:565px;background:#a0a0a0;"></div>
<div style="left:401px;top:442px;width:742px;height:1px;background:#696969;"></div>
<div style="left:401px;top:442px;width:1px;height:564px;background:#696969;"></div>
<div style="left:1142px;top:442px;width:1px;height:564px;background:#e3e3e3;"></div>
<div style="left:401px;top:1005px;width:742px;height:1px;background:#e3e3e3;"></div>
<div style="left:1143px;top:440px;width:2px;height:568px;background:#fff;"></div>
<div style="left:399px;top:1006px;width:746px;height:2px;background:#fff;"></div>
<svg style="left:402px;top:443px;overflow:hidden" width="740" height="562" viewBox="0 0 740 562"><defs><linearGradient id="bga" x1="0" x2="1" y1="0" y2="0"><stop offset="0" stop-color="#1f1f1f"/><stop offset="1" stop-color="#ffffff"/></linearGradient></defs><rect width="740" height="562" fill="url(#bga)"/><g shape-rendering="crispEdges" stroke="#064646" stroke-width="1"><path d="M0.5 0V562"/><path d="M74.5 0V562"/><path d="M148.5 0V562"/><path d="M222.5 0V562"/><path d="M296.5 0V562"/><path d="M370.5 0V562"/><path d="M444.5 0V562"/><path d="M518.5 0V562"/><path d="M592.5 0V562"/><path d="M666.5 0V562"/><path d="M0 505.5H740"/><path d="M0 449.5H740"/><path d="M0 393.5H740"/><path d="M0 337.5H740"/><path d="M0 280.5H740"/><path d="M0 224.5H740"/><path d="M0 168.5H740"/><path d="M0 112.5H740"/><path d="M0 56.5H740"/></g><g shape-rendering="crispEdges"><path d="M0.0 42.0 L185.0 44.0 L370.0 43.0 L555.0 40.0 L740.0 40.0" fill="none" stroke="#808000" stroke-width="1" stroke-dasharray="3 3"/><rect x="-4" y="38" width="8" height="8" fill="#808000"/><rect x="181" y="40" width="8" height="8" fill="#808000"/><rect x="366" y="39" width="8" height="8" fill="#808000"/><rect x="551" y="36" width="8" height="8" fill="#808000"/><rect x="736" y="36" width="8" height="8" fill="#808000"/></g><g shape-rendering="crispEdges"><path d="M0.0 126.0 L185.0 125.0 L370.0 127.0 L555.0 122.0 L740.0 119.0" fill="none" stroke="#008080" stroke-width="1" stroke-dasharray="3 3"/><rect x="-4" y="122" width="8" height="8" fill="#008080"/><rect x="181" y="121" width="8" height="8" fill="#008080"/><rect x="366" y="123" width="8" height="8" fill="#008080"/><rect x="551" y="118" width="8" height="8" fill="#008080"/><rect x="736" y="115" width="8" height="8" fill="#008080"/></g><g shape-rendering="crispEdges"><path d="M0.0 172.0 L185.0 168.0 L370.0 166.0 L555.0 162.0 L740.0 160.0" fill="none" stroke="#008000" stroke-width="1" stroke-dasharray="3 3"/><rect x="-4" y="168" width="8" height="8" fill="#008000"/><rect x="181" y="164" width="8" height="8" fill="#008000"/><rect x="366" y="162" width="8" height="8" fill="#008000"/><rect x="551" y="158" width="8" height="8" fill="#008000"/><rect x="736" y="156" width="8" height="8" fill="#008000"/></g><g shape-rendering="crispEdges"><path d="M0.0 417.5 L185.0 415.5 L370.0 414.5 L555.0 412.0 L740.0 401.0" fill="none" stroke="#800080" stroke-width="1" stroke-dasharray="3 3"/><rect x="-4" y="414" width="8" height="8" fill="#800080"/><rect x="181" y="412" width="8" height="8" fill="#800080"/><rect x="366" y="410" width="8" height="8" fill="#800080"/><rect x="551" y="408" width="8" height="8" fill="#800080"/><rect x="736" y="397" width="8" height="8" fill="#800080"/></g><g shape-rendering="crispEdges"><path d="M0.0 456.0 L185.0 453.5 L370.0 451.5 L555.0 448.5 L740.0 442.0" fill="none" stroke="#800000" stroke-width="1" stroke-dasharray="3 3"/><rect x="-4" y="452" width="8" height="8" fill="#800000"/><rect x="181" y="450" width="8" height="8" fill="#800000"/><rect x="366" y="448" width="8" height="8" fill="#800000"/><rect x="551" y="444" width="8" height="8" fill="#800000"/><rect x="736" y="438" width="8" height="8" fill="#800000"/></g><g shape-rendering="crispEdges"><path d="M0.0 528.5 L185.0 528.5 L370.0 528.5 L555.0 526.5 L740.0 520.0" fill="none" stroke="#000080" stroke-width="1" stroke-dasharray="3 3"/><rect x="-4" y="524" width="8" height="8" fill="#000080"/><rect x="181" y="524" width="8" height="8" fill="#000080"/><rect x="366" y="524" width="8" height="8" fill="#000080"/><rect x="551" y="522" width="8" height="8" fill="#000080"/><rect x="736" y="516" width="8" height="8" fill="#000080"/></g><g shape-rendering="crispEdges"><path d="M0.0 173.0 L185.0 181.0 L370.0 183.0 L555.0 177.0 L740.0 170.5" fill="none" stroke="#00ff00" stroke-width="2"/><rect x="-4" y="169" width="8" height="8" fill="#00ff00"/><rect x="181" y="177" width="8" height="8" fill="#00ff00"/><rect x="366" y="179" width="8" height="8" fill="#00ff00"/><rect x="551" y="173" width="8" height="8" fill="#00ff00"/><rect x="736" y="166" width="8" height="8" fill="#00ff00"/></g><g shape-rendering="crispEdges"><path d="M0.0 457.5 L185.0 461.0 L370.0 457.5 L555.0 448.5 L740.0 446.0" fill="none" stroke="#ff0000" stroke-width="2"/><rect x="-4" y="454" width="8" height="8" fill="#ff0000"/><rect x="181" y="457" width="8" height="8" fill="#ff0000"/><rect x="366" y="454" width="8" height="8" fill="#ff0000"/><rect x="551" y="444" width="8" height="8" fill="#ff0000"/><rect x="736" y="442" width="8" height="8" fill="#ff0000"/></g><g shape-rendering="crispEdges"><path d="M0.0 528.5 L185.0 527.0 L370.0 528.0 L555.0 524.5 L740.0 519.0" fill="none" stroke="#0000ff" stroke-width="2"/><rect x="-4" y="524" width="8" height="8" fill="#0000ff"/><rect x="181" y="523" width="8" height="8" fill="#0000ff"/><rect x="366" y="524" width="8" height="8" fill="#0000ff"/><rect x="551" y="520" width="8" height="8" fill="#0000ff"/><rect x="736" y="515" width="8" height="8" fill="#0000ff"/></g><rect x="-4" y="452" width="8" height="8" fill="#800000" shape-rendering="crispEdges"/><rect x="181" y="450" width="8" height="8" fill="#800000" shape-rendering="crispEdges"/><rect x="366" y="448" width="8" height="8" fill="#800000" shape-rendering="crispEdges"/><rect x="551" y="444" width="8" height="8" fill="#800000" shape-rendering="crispEdges"/><rect x="736" y="438" width="8" height="8" fill="#800000" shape-rendering="crispEdges"/><rect x="-4" y="524" width="8" height="8" fill="#000080" shape-rendering="crispEdges"/><rect x="181" y="524" width="8" height="8" fill="#000080" shape-rendering="crispEdges"/><rect x="366" y="524" width="8" height="8" fill="#000080" shape-rendering="crispEdges"/><rect x="551" y="522" width="8" height="8" fill="#000080" shape-rendering="crispEdges"/><rect x="736" y="516" width="8" height="8" fill="#000080" shape-rendering="crispEdges"/><g font-family="Liberation Serif,serif" font-size="14px"><text x="2.700" y="501.5" fill="#d8d8d8">10%</text><text x="2.700" y="445.5" fill="#d8d8d8">20%</text><text x="2.700" y="389.5" fill="#d8d8d8">30%</text><text x="2.700" y="333.5" fill="#d8d8d8">40%</text><text x="2.700" y="276.5" fill="#d8d8d8">50%</text><text x="2.700" y="220.5" fill="#d8d8d8">60%</text><text x="2.700" y="164.5" fill="#d8d8d8">70%</text><text x="2.700" y="108.5" fill="#d8d8d8">80%</text><text x="2.700" y="52.5" fill="#d8d8d8">90%</text><text x="76" y="558" fill="#e6e6e6">10% Sat</text><text x="150" y="558" fill="#d6d6d6">20% Sat</text><text x="224" y="558" fill="#c0c0c0">30% Sat</text><text x="298" y="558" fill="#a8a8a8">40% Sat</text><text x="372" y="558" fill="#acacac">50% Sat</text><text x="446" y="558" fill="#747474">60% Sat</text><text x="520" y="558" fill="#565656">70% Sat</text><text x="594" y="558" fill="#444444">80% Sat</text><text x="668" y="558" fill="#343434">90% Sat</text></g><g font-family="Liberation Sans,sans-serif" font-weight="bold" font-size="14px" fill="#d8d820" lengthAdjust="spacingAndGlyphs"><text x="280.300" y="14" textLength="71">Saturation</text><text x="358" y="14" textLength="46">Sweep</text><text x="408.700" y="14" textLength="76">Luminance</text></g><text x="575" y="520" font-family="Liberation Sans,sans-serif" font-weight="bold" font-size="16px" fill="#a4a4a4">hcfr.sourceforge.net</text></svg>
<div style="left:1146px;top:439px;width:746px;height:1px;background:#b4b4b4;"></div>
<div style="left:1146px;top:439px;width:1px;height:568px;background:#b4b4b4;"></div>
<div style="left:1147px;top:440px;width:745px;height:1px;background:#696969;"></div>
<div style="left:1147px;top:440px;width:1px;height:567px;background:#696969;"></div>
<div style="left:1148px;top:441px;width:743px;height:1px;background:#a0a0a0;"></div>
<div style="left:1148px;top:441px;width:1px;height:565px;background:#a0a0a0;"></div>
<div style="left:1149px;top:442px;width:742px;height:1px;background:#696969;"></div>
<div style="left:1149px;top:442px;width:1px;height:564px;background:#696969;"></div>
<div style="left:1890px;top:442px;width:1px;height:564px;background:#e3e3e3;"></div>
<div style="left:1149px;top:1005px;width:742px;height:1px;background:#e3e3e3;"></div>
<div style="left:1891px;top:440px;width:2px;height:568px;background:#fff;"></div>
<div style="left:1147px;top:1006px;width:746px;height:2px;background:#fff;"></div>
<svg style="left:1150px;top:443px;overflow:hidden" width="740" height="562" viewBox="0 0 740 562"><defs><linearGradient id="bgb" x1="0" x2="1" y1="0" y2="0"><stop offset="0" stop-color="#1f1f1f"/><stop offset="1" stop-color="#ffffff"/></linearGradient></defs><rect width="740" height="562" fill="url(#bgb)"/><g shape-rendering="crispEdges" stroke="#064646" stroke-width="1"><path d="M0.5 0V562"/><path d="M74.5 0V562"/><path d="M148.5 0V562"/><path d="M222.5 0V562"/><path d="M296.5 0V562"/><path d="M370.5 0V562"/><path d="M444.5 0V562"/><path d="M518.5 0V562"/><path d="M592.5 0V562"/><path d="M666.5 0V562"/><path d="M0 35.5H740"/><path d="M0 70.5H740"/><path d="M0 105.5H740"/><path d="M0 140.5H740"/><path d="M0 175.5H740"/><path d="M0 210.5H740"/><path d="M0 245.5H740"/><path d="M0 309.5H740"/><path d="M0 337.5H740"/><path d="M0 365.5H740"/><path d="M0 393.5H740"/><path d="M0 421.5H740"/><path d="M0 449.5H740"/><path d="M0 477.5H740"/><path d="M0 505.5H740"/><path d="M0 533.5H740"/></g><g font-family="Liberation Serif,serif" font-size="14px"><text x="2" y="31.5" fill="#d8d8d8">15%</text><text x="2" y="66.5" fill="#d8d8d8">10%</text><text x="2" y="101.5" fill="#d8d8d8">5%</text><text x="2" y="136.5" fill="#d8d8d8">0%</text><text x="2" y="171.5" fill="#d8d8d8">-5%</text><text x="2" y="206.5" fill="#d8d8d8">-10%</text><text x="2" y="241.5" fill="#d8d8d8">-15%</text><text x="2" y="305.5" fill="#d8d8d8">18</text><text x="2" y="333.5" fill="#d8d8d8">16</text><text x="2" y="361.5" fill="#d8d8d8">14</text><text x="2" y="389.5" fill="#d8d8d8">12</text><text x="2" y="417.5" fill="#d8d8d8">10</text><text x="2" y="445.5" fill="#d8d8d8">8</text><text x="2" y="473.5" fill="#d8d8d8">6</text><text x="2" y="501.5" fill="#d8d8d8">4</text><text x="2" y="529.5" fill="#d8d8d8">2</text><text x="76" y="277" fill="#e6e6e6">10% Sat</text><text x="76" y="558" fill="#e6e6e6">10% Sat</text><text x="150" y="277" fill="#d6d6d6">20% Sat</text><text x="150" y="558" fill="#d6d6d6">20% Sat</text><text x="224" y="277" fill="#c0c0c0">30% Sat</text><text x="224" y="558" fill="#c0c0c0">30% Sat</text><text x="298" y="277" fill="#a8a8a8">40% Sat</text><text x="298" y="558" fill="#a8a8a8">40% Sat</text><text x="372" y="277" fill="#acacac">50% Sat</text><text x="372" y="558" fill="#acacac">50% Sat</text><text x="446" y="277" fill="#747474">60% Sat</text><text x="446" y="558" fill="#747474">60% Sat</text><text x="520" y="277" fill="#565656">70% Sat</text><text x="520" y="558" fill="#565656">70% Sat</text><text x="594" y="277" fill="#444444">80% Sat</text><text x="594" y="558" fill="#444444">80% Sat</text><text x="668" y="277" fill="#343434">90% Sat</text><text x="668" y="558" fill="#343434">90% Sat</text></g><path d="M0 140.500H741" stroke="#fff" stroke-width="1" stroke-dasharray="3 3" shape-rendering="crispEdges"/><g shape-rendering="crispEdges"><path d="M0.0 140.0 L185.0 102.5 L370.0 105.5 L555.0 137.0 L740.0 129.5" fill="none" stroke="#ff0000" stroke-width="2"/><rect x="-4" y="136" width="8" height="8" fill="#ff0000"/><rect x="181" y="98" width="8" height="8" fill="#ff0000"/><rect x="366" y="102" width="8" height="8" fill="#ff0000"/><rect x="551" y="133" width="8" height="8" fill="#ff0000"/><rect x="736" y="126" width="8" height="8" fill="#ff0000"/></g><g shape-rendering="crispEdges"><path d="M0.0 139.0 L185.0 119.5 L370.0 90.5 L555.0 110.5 L740.0 111.5" fill="none" stroke="#00ff00" stroke-width="2"/><rect x="-4" y="135" width="8" height="8" fill="#00ff00"/><rect x="181" y="116" width="8" height="8" fill="#00ff00"/><rect x="366" y="86" width="8" height="8" fill="#00ff00"/><rect x="551" y="106" width="8" height="8" fill="#00ff00"/><rect x="736" y="108" width="8" height="8" fill="#00ff00"/></g><g shape-rendering="crispEdges"><path d="M0.0 141.0 L185.0 102.0 L370.0 114.5 L555.0 133.5 L740.0 145.5" fill="none" stroke="#0000ff" stroke-width="2"/><rect x="-4" y="137" width="8" height="8" fill="#0000ff"/><rect x="181" y="98" width="8" height="8" fill="#0000ff"/><rect x="366" y="110" width="8" height="8" fill="#0000ff"/><rect x="551" y="130" width="8" height="8" fill="#0000ff"/><rect x="736" y="142" width="8" height="8" fill="#0000ff"/></g><g shape-rendering="crispEdges"><path d="M0.0 136.0 L185.0 117.0 L370.0 79.5 L555.0 99.5 L740.0 126.5" fill="none" stroke="#ffff00" stroke-width="2"/><rect x="-4" y="132" width="8" height="8" fill="#ffff00"/><rect x="181" y="113" width="8" height="8" fill="#ffff00"/><rect x="366" y="76" width="8" height="8" fill="#ffff00"/><rect x="551" y="96" width="8" height="8" fill="#ffff00"/><rect x="736" y="122" width="8" height="8" fill="#ffff00"/></g><g shape-rendering="crispEdges"><path d="M0.0 141.0 L185.0 100.5 L370.0 52.0 L555.0 71.0 L740.0 88.5" fill="none" stroke="#00ffff" stroke-width="2"/><rect x="-4" y="137" width="8" height="8" fill="#00ffff"/><rect x="181" y="96" width="8" height="8" fill="#00ffff"/><rect x="366" y="48" width="8" height="8" fill="#00ffff"/><rect x="551" y="67" width="8" height="8" fill="#00ffff"/><rect x="736" y="84" width="8" height="8" fill="#00ffff"/></g><g shape-rendering="crispEdges"><path d="M0.0 138.5 L185.0 124.5 L370.0 83.0 L555.0 116.5 L740.0 132.0" fill="none" stroke="#ff00ff" stroke-width="2"/><rect x="-4" y="134" width="8" height="8" fill="#ff00ff"/><rect x="181" y="120" width="8" height="8" fill="#ff00ff"/><rect x="366" y="79" width="8" height="8" fill="#ff00ff"/><rect x="551" y="112" width="8" height="8" fill="#ff00ff"/><rect x="736" y="128" width="8" height="8" fill="#ff00ff"/></g><g shape-rendering="crispEdges"><path d="M0.0 555.0 L185.0 525.5 L370.0 537.0 L555.0 558.0 L740.0 552.0" fill="none" stroke="#ff0000" stroke-width="2"/><rect x="-4" y="551" width="8" height="8" fill="#ff0000"/><rect x="181" y="522" width="8" height="8" fill="#ff0000"/><rect x="366" y="533" width="8" height="8" fill="#ff0000"/><rect x="551" y="554" width="8" height="8" fill="#ff0000"/><rect x="736" y="548" width="8" height="8" fill="#ff0000"/></g><g shape-rendering="crispEdges"><path d="M0.0 555.0 L185.0 542.0 L370.0 533.5 L555.0 543.0 L740.0 544.0" fill="none" stroke="#00ff00" stroke-width="2"/><rect x="-4" y="551" width="8" height="8" fill="#00ff00"/><rect x="181" y="538" width="8" height="8" fill="#00ff00"/><rect x="366" y="530" width="8" height="8" fill="#00ff00"/><rect x="551" y="539" width="8" height="8" fill="#00ff00"/><rect x="736" y="540" width="8" height="8" fill="#00ff00"/></g><g shape-rendering="crispEdges"><path d="M0.0 554.0 L185.0 529.5 L370.0 540.5 L555.0 542.0 L740.0 525.5" fill="none" stroke="#0000ff" stroke-width="2"/><rect x="-4" y="550" width="8" height="8" fill="#0000ff"/><rect x="181" y="526" width="8" height="8" fill="#0000ff"/><rect x="366" y="536" width="8" height="8" fill="#0000ff"/><rect x="551" y="538" width="8" height="8" fill="#0000ff"/><rect x="736" y="522" width="8" height="8" fill="#0000ff"/></g><g shape-rendering="crispEdges"><path d="M0.0 556.0 L185.0 542.0 L370.0 531.0 L555.0 540.0 L740.0 551.0" fill="none" stroke="#ffff00" stroke-width="2"/><rect x="-4" y="552" width="8" height="8" fill="#ffff00"/><rect x="181" y="538" width="8" height="8" fill="#ffff00"/><rect x="366" y="527" width="8" height="8" fill="#ffff00"/><rect x="551" y="536" width="8" height="8" fill="#ffff00"/><rect x="736" y="547" width="8" height="8" fill="#ffff00"/></g><g shape-rendering="crispEdges"><path d="M0.0 552.0 L185.0 538.5 L370.0 527.0 L555.0 537.0 L740.0 540.5" fill="none" stroke="#00ffff" stroke-width="2"/><rect x="-4" y="548" width="8" height="8" fill="#00ffff"/><rect x="181" y="534" width="8" height="8" fill="#00ffff"/><rect x="366" y="523" width="8" height="8" fill="#00ffff"/><rect x="551" y="533" width="8" height="8" fill="#00ffff"/><rect x="736" y="536" width="8" height="8" fill="#00ffff"/></g><g shape-rendering="crispEdges"><path d="M0.0 558.5 L185.0 546.5 L370.0 525.5 L555.0 545.5 L740.0 542.5" fill="none" stroke="#ff00ff" stroke-width="2"/><rect x="-4" y="554" width="8" height="8" fill="#ff00ff"/><rect x="181" y="542" width="8" height="8" fill="#ff00ff"/><rect x="366" y="522" width="8" height="8" fill="#ff00ff"/><rect x="551" y="542" width="8" height="8" fill="#ff00ff"/><rect x="736" y="538" width="8" height="8" fill="#ff00ff"/></g><g font-family="Liberation Sans,sans-serif" font-weight="bold" font-size="14px" fill="#d8d820" lengthAdjust="spacingAndGlyphs"><text x="295" y="14" textLength="70.700">Saturation</text><text x="371.700" y="14" textLength="33.300">Scan</text><text x="410.700" y="14" textLength="38.600">Shifts</text></g><text x="575" y="520" font-family="Liberation Sans,sans-serif" font-weight="bold" font-size="16px" fill="#a4a4a4">hcfr.sourceforge.net</text></svg>
<!--FOOT-->
<div style="left:2px;top:1016px;width:1899px;height:1px;background:#fff;"></div>
<div style="left:384px;top:1016px;width:1px;height:1px;background:#696969;"></div>
<div style="left:385px;top:1016px;width:3px;height:1px;background:#8c8c8c;"></div>
<div style="left:2px;top:1017px;width:1899px;height:2px;background:#696969;"></div>
<div style="left:2px;top:1019px;width:1899px;height:3px;background:#b8b8b8;"></div>
<div style="left:2px;top:1022px;width:1918px;height:18px;background:#f0f0f0;"></div>
<div style="left:19px;top:1030px;width:1825px;height:2px;background:#808080;"></div>
<div style="left:2px;top:1039px;width:1918px;height:1px;background:#e0e0e0;"></div>
<div style="left:2px;top:1040px;width:1918px;height:2px;background:#fff;"></div>
<div style="left:0px;top:1022px;width:1px;height:20px;background:#a0a0a0;"></div>
<div style="left:1px;top:1022px;width:1px;height:20px;background:#696969;"></div>
<div style="left:0px;top:1042px;width:1920px;height:19px;background:#f0f0f0;"></div>
<div style="left:0px;top:1042px;width:1920px;height:1px;background:#000;"></div>
<div style="left:0px;top:1042px;width:54px;height:19px;background:#000;"></div>
<div style="left:1px;top:1043px;width:17px;height:17px;background:#f0f0f0;border:1px solid #fff;border-right-color:#808080;border-bottom-color:#808080;"></div>
<div style="left:18px;top:1043px;width:17px;height:17px;background:#f0f0f0;border:1px solid #fff;border-right-color:#808080;border-bottom-color:#808080;"></div>
<div style="left:35px;top:1043px;width:17px;height:17px;background:#f0f0f0;border:1px solid #fff;border-right-color:#808080;border-bottom-color:#808080;"></div>
<svg style="left:0;top:1042px" width="54" height="19" viewBox="0 0 54 19"><path d="M5.500 5.500l8 8M13.500 5.500l-8 8" stroke="#000" stroke-width="1.200" fill="none"/><path d="M28 5.500v8l-4 -4zM42 5.500v8l4 -4z" fill="#000"/></svg>
<svg style="left:0;top:1042px" width="400" height="20" viewBox="0 0 400 20"><path d="M118.6 0.500L126.6 18H186.8L194.8 0.500" fill="#f0f0f0" stroke="#000" stroke-width="1"/><text x="134" y="14" textLength="45" lengthAdjust="spacingAndGlyphs" font-family="Liberation Sans,sans-serif" font-size="11px" font-weight="normal" fill="#000">Luminance</text><path d="M186.8 0.500L194.8 18H239L247 0.500" fill="#f0f0f0" stroke="#000" stroke-width="1"/><text x="200" y="14" textLength="32.5" lengthAdjust="spacingAndGlyphs" font-family="Liberation Sans,sans-serif" font-size="11px" font-weight="normal" fill="#000">Gamma</text><path d="M239 0.500L247 18H313.4L321.4 0.500" fill="#f0f0f0" stroke="#000" stroke-width="1"/><text x="255" y="14" textLength="50" lengthAdjust="spacingAndGlyphs" font-family="Liberation Sans,sans-serif" font-size="11px" font-weight="normal" fill="#000">RGB Levels</text><path d="M55 0.500L63 18H119.5L127.5 0.500" fill="#fff" stroke="#000" stroke-width="1"/><path d="M55.8 0.500H126.7" stroke="#fff" stroke-width="1.200"/><text x="66.5" y="14" textLength="49.5" lengthAdjust="spacingAndGlyphs" font-family="Liberation Sans,sans-serif" font-size="11px" font-weight="bold" fill="#000">Measures</text></svg>
<svg style="left:1750px;top:1043px" width="16" height="16" viewBox="0 0 16 16" shape-rendering="crispEdges"><rect x="1" y="1" width="14" height="9" fill="#000"/><rect x="2" y="10" width="13" height="4" fill="#000"/><rect x="3" y="14" width="5" height="1" fill="#000"/><rect x="10" y="14" width="4" height="1" fill="#000"/><rect x="2" y="2" width="12" height="7" fill="#808000"/><rect x="3" y="9" width="5" height="5" fill="#808000"/><rect x="10" y="10" width="4" height="4" fill="#f8f000"/><rect x="3" y="3" width="8" height="5" fill="#e81818"/><path d="M4 5h4v-1h1v1h1v1h-1v1h-1v-1h-4z" fill="#fff"/></svg>
<div style="left:1846px;top:1044px;width:13px;height:13px;background:#fff;border:1px solid #696969;border-right-color:#fff;border-bottom-color:#fff;"></div>
<div style="left:1847px;top:1045px;width:11px;height:11px;border:1px solid #a0a0a0;border-right-color:#e3e3e3;border-bottom-color:#e3e3e3;"></div>
<div style="left:1864px;top:1044px;white-space:nowrap;font-size:11px;line-height:15px;letter-spacing:-0.050px;">Reference</div>
<div style="left:0px;top:1061px;width:1920px;height:17px;background:#eef2fb;"></div>
<div style="left:0px;top:1078px;width:1920px;height:2px;background:#202020;"></div>
<div style="left:2px;top:1065px;white-space:nowrap;font-size:12px;line-height:15px;letter-spacing:-0.400px;">Ready</div>
<div style="left:1742px;top:1062px;width:76px;height:16px;border-top:1px solid #a8b8d4;border-left:1px solid #a8b8d4;"></div>
<div style="left:1820px;top:1062px;width:29px;height:16px;border-top:1px solid #a8b8d4;border-left:1px solid #a8b8d4;"></div>
<div style="left:1851px;top:1062px;width:34px;height:16px;border-top:1px solid #a8b8d4;border-left:1px solid #a8b8d4;"></div>
<div style="left:1887px;top:1062px;width:33px;height:16px;border-top:1px solid #a8b8d4;border-left:1px solid #a8b8d4;"></div>
<div style="left:1854px;top:1064px;white-space:nowrap;font-size:12px;line-height:16px;letter-spacing:-0.300px;color:#101028;">NUM</div>
</body></html>
